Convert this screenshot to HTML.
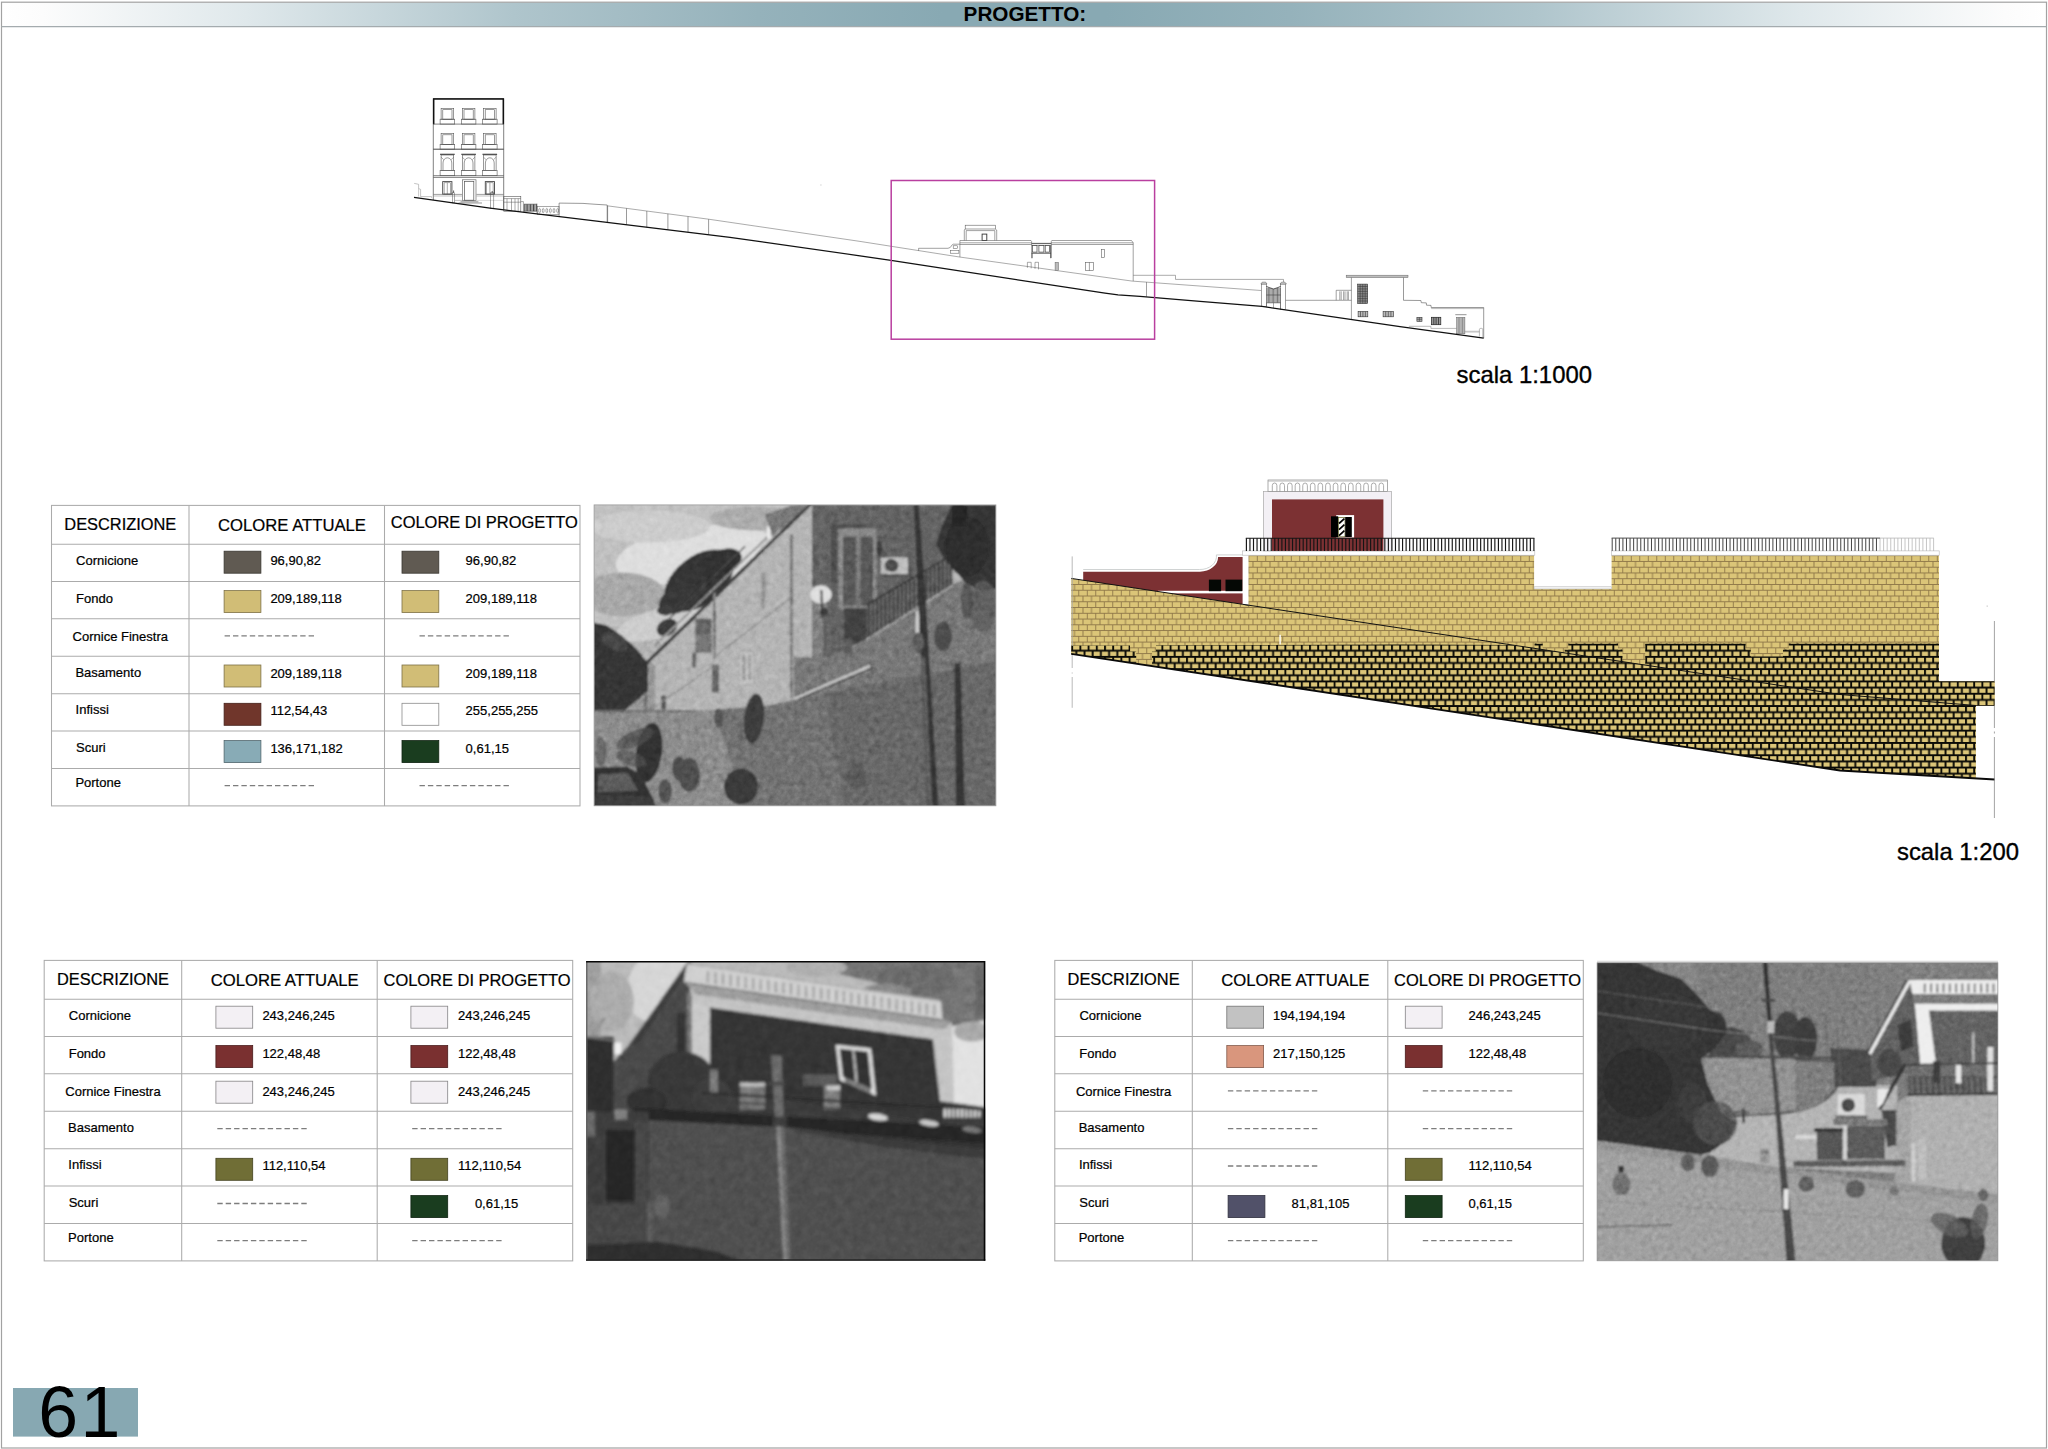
<!DOCTYPE html>
<html lang="it"><head><meta charset="utf-8"><title>PROGETTO: 61</title>
<style>
html,body{margin:0;padding:0;background:#fff;}
body{width:2048px;height:1449px;overflow:hidden;font-family:"Liberation Sans",sans-serif;}
svg{display:block;position:absolute;left:0;top:0;}
text{font-family:"Liberation Sans",sans-serif;fill:#000;}
</style></head><body>
<svg width="2048" height="1449" viewBox="0 0 2048 1449">
<defs>
<linearGradient id="hdr" x1="0" y1="0" x2="1" y2="0">
<stop offset="0" stop-color="#ffffff"/><stop offset="0.02" stop-color="#fcfcfc"/>
<stop offset="0.12" stop-color="#dfe8eb"/><stop offset="0.25" stop-color="#afc5cc"/>
<stop offset="0.37" stop-color="#95b2bb"/><stop offset="0.46" stop-color="#88a9b3"/>
<stop offset="0.54" stop-color="#88a9b3"/><stop offset="0.63" stop-color="#95b2bb"/>
<stop offset="0.75" stop-color="#afc5cc"/><stop offset="0.88" stop-color="#dfe8eb"/>
<stop offset="0.98" stop-color="#fcfcfc"/><stop offset="1" stop-color="#ffffff"/>
</linearGradient>


<pattern id="bl" patternUnits="userSpaceOnUse" x="1248.3" y="555.2" width="8.50" height="11.52">
<rect width="8.50" height="11.52" fill="#dbc578"/>
<path d="M0 0.45 H8.50 M0 6.21 H8.50 M0.45 0 V5.76 M4.70 5.76 V11.52" stroke="#917a4a" stroke-width="0.95" fill="none"/>
</pattern>
<pattern id="bd" patternUnits="userSpaceOnUse" x="1071.2" y="643.6" width="8.20" height="12.30">
<rect width="8.20" height="12.30" fill="#dbc578"/>
<path d="M0 1.0 H8.20 M0 7.15 H8.20 M1.0 0 V6.15 M5.10 6.15 V12.30" stroke="#0a0a06" stroke-width="1.9" fill="none"/>
</pattern>
<clipPath id="p1c"><rect x="0" y="0" width="401.8" height="300.9"/></clipPath>
<filter id="p1b" x="-5%" y="-5%" width="110%" height="110%"><feGaussianBlur stdDeviation="1.1"/></filter>
<filter id="p1n" x="0" y="0" width="100%" height="100%" color-interpolation-filters="sRGB"><feTurbulence type="fractalNoise" baseFrequency="0.16" numOctaves="4" seed="7"/><feColorMatrix type="matrix" values="0.6 0.6 0.6 0 -0.4  0.6 0.6 0.6 0 -0.4  0.6 0.6 0.6 0 -0.4  0 0 0 0 1"/></filter>
<clipPath id="p2c"><rect x="0" y="0" width="399.2" height="299.7"/></clipPath>
<filter id="p2b" x="-5%" y="-5%" width="110%" height="110%"><feGaussianBlur stdDeviation="1.5"/></filter>
<filter id="p2n" x="0" y="0" width="100%" height="100%" color-interpolation-filters="sRGB"><feTurbulence type="fractalNoise" baseFrequency="0.12" numOctaves="3" seed="7"/><feColorMatrix type="matrix" values="0.6 0.6 0.6 0 -0.4  0.6 0.6 0.6 0 -0.4  0.6 0.6 0.6 0 -0.4  0 0 0 0 1"/></filter>
<clipPath id="p3c"><rect x="0" y="0" width="400.8" height="298.0"/></clipPath>
<filter id="p3b" x="-5%" y="-5%" width="110%" height="110%"><feGaussianBlur stdDeviation="1.1"/></filter>
<filter id="p3n" x="0" y="0" width="100%" height="100%" color-interpolation-filters="sRGB"><feTurbulence type="fractalNoise" baseFrequency="0.18" numOctaves="4" seed="7"/><feColorMatrix type="matrix" values="0.6 0.6 0.6 0 -0.4  0.6 0.6 0.6 0 -0.4  0.6 0.6 0.6 0 -0.4  0 0 0 0 1"/></filter>
</defs>
<rect x="0" y="0" width="2048" height="1449" fill="#fff"/>
<rect x="2" y="2.5" width="2044" height="24" fill="url(#hdr)"/>
<rect x="1.5" y="2.2" width="2045" height="1445.8" fill="none" stroke="#a2a2a2" stroke-width="1.2"/>
<line x1="1.5" y1="26.6" x2="2046.5" y2="26.6" stroke="#a4abae" stroke-width="1.3"/>
<text x="963.6" y="21.4" font-size="19.8" font-weight="bold" textLength="122.6" lengthAdjust="spacingAndGlyphs">PROGETTO:</text>
<rect x="13" y="1388" width="125" height="48.6" fill="#87a8b2"/>
<text y="1437.3" font-size="71.6"><tspan x="38.2">6</tspan><tspan x="80.6">1</tspan></text>
<text x="1456.6" y="382.9" font-size="23.2" stroke="#000" stroke-width="0.35" textLength="135.4" lengthAdjust="spacingAndGlyphs">scala 1:1000</text>
<text x="1897" y="859.5" font-size="23.2" stroke="#000" stroke-width="0.35" textLength="122" lengthAdjust="spacingAndGlyphs">scala 1:200</text>

<g stroke="#000" stroke-width="0.22"><g stroke="#ababab" stroke-width="1.05" fill="none">
<rect x="51.5" y="505.4" width="528.5" height="300.5"/>
<line x1="51.5" y1="544.2" x2="580.0" y2="544.2"/>
<line x1="51.5" y1="581.4" x2="580.0" y2="581.4"/>
<line x1="51.5" y1="618.8" x2="580.0" y2="618.8"/>
<line x1="51.5" y1="656.3" x2="580.0" y2="656.3"/>
<line x1="51.5" y1="693.8" x2="580.0" y2="693.8"/>
<line x1="51.5" y1="730.9" x2="580.0" y2="730.9"/>
<line x1="51.5" y1="768.4" x2="580.0" y2="768.4"/>
<line x1="189.0" y1="505.4" x2="189.0" y2="805.9"/>
<line x1="384.5" y1="505.4" x2="384.5" y2="805.9"/>
</g>
<text x="64.3" y="530.4" font-size="15.8" textLength="112" lengthAdjust="spacingAndGlyphs">DESCRIZIONE</text>
<text x="218.0" y="531.3" font-size="16.5" textLength="148" lengthAdjust="spacingAndGlyphs">COLORE ATTUALE</text>
<text x="390.8" y="527.8" font-size="16.5" textLength="187" lengthAdjust="spacingAndGlyphs">COLORE DI PROGETTO</text>
<text x="76.1" y="565.2" font-size="13">Cornicione</text>
<text x="76.0" y="603.0" font-size="13">Fondo</text>
<text x="72.6" y="641.2" font-size="13">Cornice Finestra</text>
<text x="75.4" y="676.8" font-size="13">Basamento</text>
<text x="75.6" y="713.8" font-size="13">Infissi</text>
<text x="76.0" y="752.0" font-size="13">Scuri</text>
<text x="75.4" y="787.0" font-size="13">Portone</text>
<rect x="224.1" y="551.2" width="36.8" height="22" fill="#605a52" stroke="#393631" stroke-width="0.8"/>
<text x="270.4" y="565.4" font-size="13">96,90,82</text>
<rect x="402.0" y="551.2" width="36.8" height="22" fill="#605a52" stroke="#393631" stroke-width="0.8"/>
<text x="465.6" y="565.4" font-size="13">96,90,82</text>
<rect x="224.1" y="590.6" width="36.8" height="22" fill="#d1bd76" stroke="#7d7146" stroke-width="0.8"/>
<text x="270.4" y="603.0" font-size="13">209,189,118</text>
<rect x="402.0" y="590.6" width="36.8" height="22" fill="#d1bd76" stroke="#7d7146" stroke-width="0.8"/>
<text x="465.6" y="603.0" font-size="13">209,189,118</text>
<line x1="224.6" y1="635.9" x2="315.6" y2="635.9" stroke="#7d7d7d" stroke-width="1.3" stroke-dasharray="5.4 3.0"/>
<line x1="419.5" y1="635.9" x2="510.5" y2="635.9" stroke="#7d7d7d" stroke-width="1.3" stroke-dasharray="5.4 3.0"/>
<rect x="224.1" y="665.0" width="36.8" height="22" fill="#d1bd76" stroke="#7d7146" stroke-width="0.8"/>
<text x="270.4" y="677.6" font-size="13">209,189,118</text>
<rect x="402.0" y="665.0" width="36.8" height="22" fill="#d1bd76" stroke="#7d7146" stroke-width="0.8"/>
<text x="465.6" y="677.6" font-size="13">209,189,118</text>
<rect x="224.1" y="703.3" width="36.8" height="22" fill="#70362b" stroke="#432019" stroke-width="0.8"/>
<text x="270.4" y="715.0" font-size="13">112,54,43</text>
<rect x="402.0" y="703.3" width="36.8" height="22" fill="#ffffff" stroke="#8c8c8c" stroke-width="0.8"/>
<text x="465.6" y="715.0" font-size="13">255,255,255</text>
<rect x="224.1" y="740.6" width="36.8" height="22" fill="#88abb6" stroke="#51666d" stroke-width="0.8"/>
<text x="270.4" y="752.9" font-size="13">136,171,182</text>
<rect x="402.0" y="740.6" width="36.8" height="22" fill="#1a3d1f" stroke="#0f2412" stroke-width="0.8"/>
<text x="465.6" y="752.9" font-size="13">0,61,15</text>
<line x1="224.6" y1="785.7" x2="315.6" y2="785.7" stroke="#7d7d7d" stroke-width="1.3" stroke-dasharray="5.4 3.0"/>
<line x1="419.5" y1="785.7" x2="510.5" y2="785.7" stroke="#7d7d7d" stroke-width="1.3" stroke-dasharray="5.4 3.0"/>
<g stroke="#ababab" stroke-width="1.05" fill="none">
<rect x="44.2" y="960.4" width="528.5" height="300.5"/>
<line x1="44.2" y1="999.2" x2="572.7" y2="999.2"/>
<line x1="44.2" y1="1036.4" x2="572.7" y2="1036.4"/>
<line x1="44.2" y1="1073.8" x2="572.7" y2="1073.8"/>
<line x1="44.2" y1="1111.3" x2="572.7" y2="1111.3"/>
<line x1="44.2" y1="1148.8" x2="572.7" y2="1148.8"/>
<line x1="44.2" y1="1185.9" x2="572.7" y2="1185.9"/>
<line x1="44.2" y1="1223.4" x2="572.7" y2="1223.4"/>
<line x1="181.7" y1="960.4" x2="181.7" y2="1260.9"/>
<line x1="377.2" y1="960.4" x2="377.2" y2="1260.9"/>
</g>
<text x="57.0" y="985.4" font-size="15.8" textLength="112" lengthAdjust="spacingAndGlyphs">DESCRIZIONE</text>
<text x="210.7" y="986.3" font-size="16.5" textLength="148" lengthAdjust="spacingAndGlyphs">COLORE ATTUALE</text>
<text x="383.5" y="986.3" font-size="16.5" textLength="187" lengthAdjust="spacingAndGlyphs">COLORE DI PROGETTO</text>
<text x="68.8" y="1020.2" font-size="13">Cornicione</text>
<text x="68.7" y="1058.0" font-size="13">Fondo</text>
<text x="65.3" y="1096.2" font-size="13">Cornice Finestra</text>
<text x="68.1" y="1131.8" font-size="13">Basamento</text>
<text x="68.3" y="1168.8" font-size="13">Infissi</text>
<text x="68.7" y="1207.0" font-size="13">Scuri</text>
<text x="68.1" y="1242.0" font-size="13">Portone</text>
<rect x="215.9" y="1006.2" width="36.8" height="22" fill="#f3f0f4" stroke="#858486" stroke-width="0.8"/>
<text x="262.4" y="1020.4" font-size="13">243,246,245</text>
<rect x="410.9" y="1006.2" width="36.8" height="22" fill="#f3f0f4" stroke="#858486" stroke-width="0.8"/>
<text x="458.0" y="1020.4" font-size="13">243,246,245</text>
<rect x="215.9" y="1045.6" width="36.8" height="22" fill="#7a3030" stroke="#491c1c" stroke-width="0.8"/>
<text x="262.4" y="1058.0" font-size="13">122,48,48</text>
<rect x="410.9" y="1045.6" width="36.8" height="22" fill="#7a3030" stroke="#491c1c" stroke-width="0.8"/>
<text x="458.0" y="1058.0" font-size="13">122,48,48</text>
<rect x="215.9" y="1081.2" width="36.8" height="22" fill="#f3f0f4" stroke="#858486" stroke-width="0.8"/>
<text x="262.4" y="1095.5" font-size="13">243,246,245</text>
<rect x="410.9" y="1081.2" width="36.8" height="22" fill="#f3f0f4" stroke="#858486" stroke-width="0.8"/>
<text x="458.0" y="1095.5" font-size="13">243,246,245</text>
<line x1="217.3" y1="1128.6" x2="308.3" y2="1128.6" stroke="#7d7d7d" stroke-width="1.3" stroke-dasharray="5.4 3.0"/>
<line x1="412.2" y1="1128.6" x2="503.2" y2="1128.6" stroke="#7d7d7d" stroke-width="1.3" stroke-dasharray="5.4 3.0"/>
<rect x="215.9" y="1158.3" width="36.8" height="22" fill="#706e36" stroke="#434220" stroke-width="0.8"/>
<text x="262.4" y="1170.0" font-size="13">112,110,54</text>
<rect x="410.9" y="1158.3" width="36.8" height="22" fill="#706e36" stroke="#434220" stroke-width="0.8"/>
<text x="458.0" y="1170.0" font-size="13">112,110,54</text>
<line x1="217.3" y1="1203.5" x2="308.3" y2="1203.5" stroke="#7d7d7d" stroke-width="1.3" stroke-dasharray="5.4 3.0"/>
<rect x="410.9" y="1195.6" width="36.8" height="22" fill="#1a3d1f" stroke="#0f2412" stroke-width="0.8"/>
<text x="474.9" y="1207.9" font-size="13">0,61,15</text>
<line x1="217.3" y1="1240.7" x2="308.3" y2="1240.7" stroke="#7d7d7d" stroke-width="1.3" stroke-dasharray="5.4 3.0"/>
<line x1="412.2" y1="1240.7" x2="503.2" y2="1240.7" stroke="#7d7d7d" stroke-width="1.3" stroke-dasharray="5.4 3.0"/>
<g stroke="#ababab" stroke-width="1.05" fill="none">
<rect x="1054.8" y="960.4" width="528.5" height="300.5"/>
<line x1="1054.8" y1="999.2" x2="1583.3" y2="999.2"/>
<line x1="1054.8" y1="1036.4" x2="1583.3" y2="1036.4"/>
<line x1="1054.8" y1="1073.8" x2="1583.3" y2="1073.8"/>
<line x1="1054.8" y1="1111.3" x2="1583.3" y2="1111.3"/>
<line x1="1054.8" y1="1148.8" x2="1583.3" y2="1148.8"/>
<line x1="1054.8" y1="1185.9" x2="1583.3" y2="1185.9"/>
<line x1="1054.8" y1="1223.4" x2="1583.3" y2="1223.4"/>
<line x1="1192.3" y1="960.4" x2="1192.3" y2="1260.9"/>
<line x1="1387.8" y1="960.4" x2="1387.8" y2="1260.9"/>
</g>
<text x="1067.6" y="985.4" font-size="15.8" textLength="112" lengthAdjust="spacingAndGlyphs">DESCRIZIONE</text>
<text x="1221.3" y="986.3" font-size="16.5" textLength="148" lengthAdjust="spacingAndGlyphs">COLORE ATTUALE</text>
<text x="1394.1" y="986.3" font-size="16.5" textLength="187" lengthAdjust="spacingAndGlyphs">COLORE DI PROGETTO</text>
<text x="1079.4" y="1020.2" font-size="13">Cornicione</text>
<text x="1079.3" y="1058.0" font-size="13">Fondo</text>
<text x="1075.9" y="1096.2" font-size="13">Cornice Finestra</text>
<text x="1078.7" y="1131.8" font-size="13">Basamento</text>
<text x="1078.9" y="1168.8" font-size="13">Infissi</text>
<text x="1079.3" y="1207.0" font-size="13">Scuri</text>
<text x="1078.7" y="1242.0" font-size="13">Portone</text>
<rect x="1226.8" y="1006.2" width="36.8" height="22" fill="#c2c2c2" stroke="#747474" stroke-width="0.8"/>
<text x="1273.0" y="1020.4" font-size="13">194,194,194</text>
<rect x="1405.3" y="1006.2" width="36.8" height="22" fill="#f3f0f4" stroke="#858486" stroke-width="0.8"/>
<text x="1468.5" y="1020.4" font-size="13">246,243,245</text>
<rect x="1226.8" y="1045.6" width="36.8" height="22" fill="#d9967d" stroke="#825a4b" stroke-width="0.8"/>
<text x="1273.0" y="1058.0" font-size="13">217,150,125</text>
<rect x="1405.3" y="1045.6" width="36.8" height="22" fill="#7a3030" stroke="#491c1c" stroke-width="0.8"/>
<text x="1468.5" y="1058.0" font-size="13">122,48,48</text>
<line x1="1227.9" y1="1090.9" x2="1318.9" y2="1090.9" stroke="#7d7d7d" stroke-width="1.3" stroke-dasharray="5.4 3.0"/>
<line x1="1422.8" y1="1090.9" x2="1513.8" y2="1090.9" stroke="#7d7d7d" stroke-width="1.3" stroke-dasharray="5.4 3.0"/>
<line x1="1227.9" y1="1128.6" x2="1318.9" y2="1128.6" stroke="#7d7d7d" stroke-width="1.3" stroke-dasharray="5.4 3.0"/>
<line x1="1422.8" y1="1128.6" x2="1513.8" y2="1128.6" stroke="#7d7d7d" stroke-width="1.3" stroke-dasharray="5.4 3.0"/>
<line x1="1227.9" y1="1166.0" x2="1318.9" y2="1166.0" stroke="#7d7d7d" stroke-width="1.3" stroke-dasharray="5.4 3.0"/>
<rect x="1405.3" y="1158.3" width="36.8" height="22" fill="#706e36" stroke="#434220" stroke-width="0.8"/>
<text x="1468.5" y="1170.0" font-size="13">112,110,54</text>
<rect x="1228.1" y="1195.6" width="36.8" height="22" fill="#515169" stroke="#30303f" stroke-width="0.8"/>
<text x="1291.6" y="1207.9" font-size="13">81,81,105</text>
<rect x="1405.3" y="1195.6" width="36.8" height="22" fill="#1a3d1f" stroke="#0f2412" stroke-width="0.8"/>
<text x="1468.5" y="1207.9" font-size="13">0,61,15</text>
<line x1="1227.9" y1="1240.7" x2="1318.9" y2="1240.7" stroke="#7d7d7d" stroke-width="1.3" stroke-dasharray="5.4 3.0"/>
<line x1="1422.8" y1="1240.7" x2="1513.8" y2="1240.7" stroke="#7d7d7d" stroke-width="1.3" stroke-dasharray="5.4 3.0"/></g>
<path d="M433.3 200.0 L433.3 98.5 L503.7 98.5 L503.7 209.8" fill="none" stroke="#4a4a4a" stroke-width="0.7"/>
<path d="M433.7 124.3 L433.7 98.9 L503.3 98.9 L503.3 124.3" fill="none" stroke="#111" stroke-width="1.5"/>
<path d="M433.3 124.1 L503.7 124.1" fill="none" stroke="#4a4a4a" stroke-width="0.7"/>
<path d="M433.3 149.2 L503.7 149.2" fill="none" stroke="#333" stroke-width="0.9"/>
<path d="M433.3 175.7 L503.7 175.7" fill="none" stroke="#4a4a4a" stroke-width="0.7"/>
<path d="M433.3 177.4 L503.7 177.4" fill="none" stroke="#4a4a4a" stroke-width="0.7"/>
<path d="M433.3 194.4 L462.0 194.4" fill="none" stroke="#777" stroke-width="0.7"/>
<path d="M476.5 194.4 L503.7 194.4" fill="none" stroke="#777" stroke-width="0.7"/>
<path d="M433.3 196.0 L462.0 196.0" fill="none" stroke="#999" stroke-width="0.6"/>
<path d="M476.5 196.0 L503.7 196.0" fill="none" stroke="#999" stroke-width="0.6"/>
<rect x="441.1" y="108.4" width="12.6" height="10.8" fill="none" stroke="#555" stroke-width="0.6"/>
<rect x="442.8" y="109.7" width="9.2" height="9.5" fill="none" stroke="#555" stroke-width="0.6"/>
<rect x="440.1" y="119.2" width="14.6" height="4.9" fill="none" stroke="#555" stroke-width="0.6"/>
<rect x="441.1" y="133.5" width="12.6" height="10.8" fill="none" stroke="#555" stroke-width="0.6"/>
<rect x="442.8" y="134.8" width="9.2" height="9.5" fill="none" stroke="#555" stroke-width="0.6"/>
<rect x="440.1" y="144.3" width="14.6" height="4.9" fill="none" stroke="#555" stroke-width="0.6"/>
<path d="M440.1 154.3 L454.7 154.3" fill="none" stroke="#333" stroke-width="1.1"/>
<rect x="441.1" y="155.0" width="12.6" height="15.3" fill="none" stroke="#555" stroke-width="0.6"/>
<path d="M443.0 170.3 V163.0 A4.4 5.2 0 0 1 451.8 163.0 V170.3" fill="none" stroke="#555" stroke-width="0.6"/>
<path d="M441.1 157.2 L443.6 159.6" fill="none" stroke="#555" stroke-width="0.5"/>
<path d="M453.7 157.2 L451.2 159.6" fill="none" stroke="#555" stroke-width="0.5"/>
<rect x="440.1" y="170.3" width="14.6" height="5.4" fill="none" stroke="#555" stroke-width="0.6"/>
<rect x="462.3" y="108.4" width="12.6" height="10.8" fill="none" stroke="#555" stroke-width="0.6"/>
<rect x="464.0" y="109.7" width="9.2" height="9.5" fill="none" stroke="#555" stroke-width="0.6"/>
<rect x="461.3" y="119.2" width="14.6" height="4.9" fill="none" stroke="#555" stroke-width="0.6"/>
<rect x="462.3" y="133.5" width="12.6" height="10.8" fill="none" stroke="#555" stroke-width="0.6"/>
<rect x="464.0" y="134.8" width="9.2" height="9.5" fill="none" stroke="#555" stroke-width="0.6"/>
<rect x="461.3" y="144.3" width="14.6" height="4.9" fill="none" stroke="#555" stroke-width="0.6"/>
<path d="M461.3 154.3 L475.9 154.3" fill="none" stroke="#333" stroke-width="1.1"/>
<rect x="462.3" y="155.0" width="12.6" height="15.3" fill="none" stroke="#555" stroke-width="0.6"/>
<path d="M464.2 170.3 V163.0 A4.4 5.2 0 0 1 473.0 163.0 V170.3" fill="none" stroke="#555" stroke-width="0.6"/>
<path d="M462.3 157.2 L464.8 159.6" fill="none" stroke="#555" stroke-width="0.5"/>
<path d="M474.9 157.2 L472.4 159.6" fill="none" stroke="#555" stroke-width="0.5"/>
<rect x="461.3" y="170.3" width="14.6" height="5.4" fill="none" stroke="#555" stroke-width="0.6"/>
<rect x="483.5" y="108.4" width="12.6" height="10.8" fill="none" stroke="#555" stroke-width="0.6"/>
<rect x="485.2" y="109.7" width="9.2" height="9.5" fill="none" stroke="#555" stroke-width="0.6"/>
<rect x="482.5" y="119.2" width="14.6" height="4.9" fill="none" stroke="#555" stroke-width="0.6"/>
<rect x="483.5" y="133.5" width="12.6" height="10.8" fill="none" stroke="#555" stroke-width="0.6"/>
<rect x="485.2" y="134.8" width="9.2" height="9.5" fill="none" stroke="#555" stroke-width="0.6"/>
<rect x="482.5" y="144.3" width="14.6" height="4.9" fill="none" stroke="#555" stroke-width="0.6"/>
<path d="M482.5 154.3 L497.1 154.3" fill="none" stroke="#333" stroke-width="1.1"/>
<rect x="483.5" y="155.0" width="12.6" height="15.3" fill="none" stroke="#555" stroke-width="0.6"/>
<path d="M485.4 170.3 V163.0 A4.4 5.2 0 0 1 494.2 163.0 V170.3" fill="none" stroke="#555" stroke-width="0.6"/>
<path d="M483.5 157.2 L486.0 159.6" fill="none" stroke="#555" stroke-width="0.5"/>
<path d="M496.1 157.2 L493.6 159.6" fill="none" stroke="#555" stroke-width="0.5"/>
<rect x="482.5" y="170.3" width="14.6" height="5.4" fill="none" stroke="#555" stroke-width="0.6"/>
<rect x="442.7" y="181.6" width="9.2" height="12.5" fill="none" stroke="#444" stroke-width="0.9"/>
<rect x="444.1" y="182.8" width="6.4" height="11.3" fill="none" stroke="#555" stroke-width="0.5"/>
<path d="M447.3 182.8 L447.3 194.1" fill="none" stroke="#555" stroke-width="0.5"/>
<rect x="485.3" y="181.6" width="9.2" height="12.5" fill="none" stroke="#444" stroke-width="0.9"/>
<rect x="486.7" y="182.8" width="6.4" height="11.3" fill="none" stroke="#555" stroke-width="0.5"/>
<path d="M489.9 182.8 L489.9 194.1" fill="none" stroke="#555" stroke-width="0.5"/>
<rect x="462.4" y="179.8" width="13.6" height="20.8" fill="none" stroke="#555" stroke-width="0.6"/>
<rect x="464.6" y="181.6" width="9.2" height="18.6" fill="none" stroke="#555" stroke-width="0.7"/>
<path d="M460.5 201.8 L478.4 201.8" fill="none" stroke="#555" stroke-width="0.6"/>
<path d="M458.5 203.0 L482.0 203.0" fill="none" stroke="#555" stroke-width="0.6"/>
<path d="M455.0 200.4 L462.4 200.4" fill="none" stroke="#888" stroke-width="0.5"/>
<path d="M476.0 200.4 L503.7 200.4" fill="none" stroke="#bbb" stroke-width="0.5"/>
<rect x="452.6" y="192.8" width="2.0" height="10.1" fill="none" stroke="#555" stroke-width="0.5"/>
<rect x="490.6" y="192.8" width="3.2" height="15.5" fill="none" stroke="#555" stroke-width="0.5"/>
<path d="M453.6 190.5 L453.6 192.8" fill="none" stroke="#333" stroke-width="0.8"/>
<path d="M492.2 191.0 L492.2 192.8" fill="none" stroke="#333" stroke-width="0.8"/>
<path d="M414.2 183.4 L418.6 184.3 L418.6 188.6 L420.6 189.4 L420.6 196.6 L431.5 196.6 L431.5 197.8" fill="none" stroke="#888" stroke-width="0.5"/>
<path d="M418.6 188.6 L418.6 196.5" fill="none" stroke="#999" stroke-width="0.5"/>
<rect x="503.8" y="196.3" width="17.0" height="14.9" fill="none" stroke="#555" stroke-width="0.6"/>
<path d="M507.0 198.6 L507.0 210.2" fill="none" stroke="#555" stroke-width="0.5"/>
<path d="M511.5 198.6 L511.5 210.7" fill="none" stroke="#555" stroke-width="0.5"/>
<path d="M515.0 198.6 L515.0 211.2" fill="none" stroke="#555" stroke-width="0.5"/>
<path d="M518.2 198.6 L518.2 211.5" fill="none" stroke="#555" stroke-width="0.5"/>
<path d="M503.8 198.6 L520.8 198.6" fill="none" stroke="#555" stroke-width="0.5"/>
<path d="M503.8 202.2 L520.8 202.2" fill="none" stroke="#555" stroke-width="0.5"/>
<path d="M520.8 201.6 L523.4 201.6 L523.4 212.2" fill="none" stroke="#555" stroke-width="0.5"/>
<path d="M524.8 204.2 L524.8 211.2" fill="none" stroke="#333" stroke-width="0.9"/>
<path d="M526.2 204.2 L526.2 211.2" fill="none" stroke="#333" stroke-width="0.9"/>
<path d="M527.7 204.2 L527.7 211.2" fill="none" stroke="#333" stroke-width="0.9"/>
<path d="M529.1 204.2 L529.1 211.2" fill="none" stroke="#333" stroke-width="0.9"/>
<path d="M530.6 204.2 L530.6 211.2" fill="none" stroke="#333" stroke-width="0.9"/>
<path d="M532.0 204.2 L532.0 211.2" fill="none" stroke="#333" stroke-width="0.9"/>
<path d="M533.5 204.2 L533.5 211.2" fill="none" stroke="#333" stroke-width="0.9"/>
<path d="M534.9 204.2 L534.9 211.2" fill="none" stroke="#333" stroke-width="0.9"/>
<path d="M536.4 204.2 L536.4 211.2" fill="none" stroke="#333" stroke-width="0.9"/>
<path d="M524.0 204.2 L537.0 204.2" fill="none" stroke="#444" stroke-width="0.6"/>
<path d="M524.0 211.2 L537.0 211.2" fill="none" stroke="#444" stroke-width="0.6"/>
<path d="M524.0 204.2 L524.0 212.3" fill="none" stroke="#555" stroke-width="0.5"/>
<path d="M537.0 203.6 L537.0 213.8" fill="none" stroke="#555" stroke-width="0.5"/>
<rect x="537.2" y="206.5" width="21.8" height="8.1" fill="none" stroke="#555" stroke-width="0.5"/>
<ellipse cx="539.6" cy="210.6" rx="0.9" ry="2.3" fill="none" stroke="#555" stroke-width="0.5"/>
<ellipse cx="543.2" cy="210.6" rx="0.9" ry="2.3" fill="none" stroke="#555" stroke-width="0.5"/>
<ellipse cx="546.8" cy="210.6" rx="0.9" ry="2.3" fill="none" stroke="#555" stroke-width="0.5"/>
<ellipse cx="550.4" cy="210.6" rx="0.9" ry="2.3" fill="none" stroke="#555" stroke-width="0.5"/>
<ellipse cx="554.0" cy="210.6" rx="0.9" ry="2.3" fill="none" stroke="#555" stroke-width="0.5"/>
<ellipse cx="557.6" cy="210.6" rx="0.9" ry="2.3" fill="none" stroke="#555" stroke-width="0.5"/>
<path d="M559.1 216.5 L559.1 203.1 L583.0 203.4 L594.0 204.2 L607.2 205.0 L607.2 222.4" fill="none" stroke="#555" stroke-width="0.6"/>
<path d="M607.2 205.8 L708.6 219.2 L860.0 241.4 L959.5 257.0 L1132.2 281.1" fill="none" stroke="#666" stroke-width="0.55"/>
<path d="M607.6 205.9 L607.6 222.5" fill="none" stroke="#555" stroke-width="0.6"/>
<path d="M626.5 208.3 L626.5 224.8" fill="none" stroke="#555" stroke-width="0.6"/>
<path d="M646.8 211.0 L646.8 227.3" fill="none" stroke="#555" stroke-width="0.6"/>
<path d="M667.9 213.8 L667.9 229.8" fill="none" stroke="#555" stroke-width="0.6"/>
<path d="M688.0 216.5 L688.0 232.3" fill="none" stroke="#555" stroke-width="0.6"/>
<path d="M708.6 219.2 L708.6 234.8" fill="none" stroke="#555" stroke-width="0.6"/>
<rect x="965.2" y="225.2" width="30.1" height="3.8" fill="none" stroke="#555" stroke-width="0.55"/>
<path d="M964.3 240.5 L964.3 230.0 L965.2 229.0" fill="none" stroke="#555" stroke-width="0.55"/>
<path d="M996.7 240.5 L996.7 230.0 L995.3 229.0" fill="none" stroke="#555" stroke-width="0.55"/>
<path d="M966.2 240.5 L966.2 230.6 L994.8 230.6 L994.8 240.5" fill="none" stroke="#555" stroke-width="0.55"/>
<rect x="982.1" y="234.1" width="4.7" height="6.4" fill="none" stroke="#333" stroke-width="0.9"/>
<path d="M959.9 257.1 L959.9 240.5 L1031.0 240.5 L1031.6 241.4 L1031.6 258.2" fill="none" stroke="#555" stroke-width="0.55"/>
<path d="M959.9 242.8 L1031.6 242.8" fill="none" stroke="#555" stroke-width="0.55"/>
<path d="M959.9 244.5 L1031.6 244.5" fill="none" stroke="#555" stroke-width="0.55"/>
<path d="M918.6 250.9 L918.6 248.3 L948.0 248.3 L950.3 247.4 L952.2 244.8 L953.4 244.2 L959.9 244.2" fill="none" stroke="#555" stroke-width="0.55"/>
<rect x="953.2" y="245.8" width="4.4" height="2.9" fill="none" stroke="#555" stroke-width="0.5"/>
<rect x="950.4" y="250.6" width="8.5" height="2.6" fill="none" stroke="#555" stroke-width="0.5"/>
<path d="M1031.6 243.4 L1051.3 243.4" fill="none" stroke="#444" stroke-width="0.9"/>
<path d="M1031.6 245.3 L1051.3 245.3" fill="none" stroke="#555" stroke-width="0.55"/>
<rect x="1032.5" y="245.6" width="4.5" height="6.5" fill="none" stroke="#444" stroke-width="0.7"/>
<rect x="1038.9" y="245.6" width="5.0" height="6.5" fill="none" stroke="#444" stroke-width="0.7"/>
<rect x="1045.2" y="245.6" width="4.4" height="6.5" fill="none" stroke="#444" stroke-width="0.7"/>
<path d="M1031.6 253.2 L1051.0 253.2" fill="none" stroke="#444" stroke-width="0.9"/>
<path d="M1050.7 245.3 L1050.7 258.2" fill="none" stroke="#444" stroke-width="0.9"/>
<path d="M1032.2 253.2 L1032.2 258.2" fill="none" stroke="#444" stroke-width="0.7"/>
<path d="M1051.3 258.0 L1051.3 241.4 L1051.8 240.5 L1131.5 240.5 L1133.2 242.8 L1133.2 281.1" fill="none" stroke="#555" stroke-width="0.55"/>
<path d="M1051.3 242.8 L1133.2 242.8" fill="none" stroke="#555" stroke-width="0.55"/>
<path d="M1051.3 244.5 L1133.2 244.5" fill="none" stroke="#555" stroke-width="0.55"/>
<rect x="1101.4" y="249.4" width="3.1" height="8.2" fill="none" stroke="#555" stroke-width="0.55"/>
<rect x="1085.4" y="262.3" width="8.0" height="8.4" fill="none" stroke="#555" stroke-width="0.55"/>
<path d="M1089.4 262.3 L1089.4 270.7" fill="none" stroke="#555" stroke-width="0.55"/>
<rect x="1055.1" y="262.3" width="3.4" height="8.4" fill="#bbb" stroke="#666" stroke-width="0.5"/>
<path d="M1027.4 267.8 L1027.4 262.3 L1031.2 262.3 L1031.2 268.3" fill="none" stroke="#555" stroke-width="0.5"/>
<path d="M1035.0 268.9 L1035.0 262.3 L1038.5 262.3 L1038.5 269.4" fill="none" stroke="#555" stroke-width="0.5"/>
<path d="M1133.2 275.3 L1175.5 275.3 L1175.5 279.4 L1283.5 279.4 L1283.5 282.0" fill="none" stroke="#666" stroke-width="0.55"/>
<path d="M1132.2 281.1 L1261.2 290.5" fill="none" stroke="#666" stroke-width="0.55"/>
<path d="M1146.5 282.1 L1146.5 296.6" fill="none" stroke="#555" stroke-width="0.55"/>
<rect x="1261.6" y="284.0" width="4.7" height="22.7" fill="none" stroke="#555" stroke-width="0.55"/>
<rect x="1280.7" y="284.0" width="5.0" height="25.5" fill="none" stroke="#555" stroke-width="0.55"/>
<path d="M1260.9 284.0 L1262.2 282.2 L1265.7 282.2 L1267.0 284.0 Z" fill="#ddd" stroke="#555" stroke-width="0.55"/>
<path d="M1280.0 284.0 L1281.5 282.2 L1284.9 282.2 L1286.4 284.0 Z" fill="#ddd" stroke="#555" stroke-width="0.55"/>
<path d="M1266.3 286.4 L1270.0 287.9 L1273.5 289.0 L1277.0 287.9 L1280.7 286.4" fill="none" stroke="#333" stroke-width="0.8"/>
<path d="M1267.1 287.9 L1267.1 302.8" fill="none" stroke="#444" stroke-width="0.7"/>
<path d="M1268.4 287.9 L1268.4 302.8" fill="none" stroke="#444" stroke-width="0.7"/>
<path d="M1269.7 287.9 L1269.7 302.8" fill="none" stroke="#444" stroke-width="0.7"/>
<path d="M1271.0 287.9 L1271.0 302.8" fill="none" stroke="#444" stroke-width="0.7"/>
<path d="M1272.3 288.8 L1272.3 302.8" fill="none" stroke="#444" stroke-width="0.7"/>
<path d="M1273.6 288.8 L1273.6 302.8" fill="none" stroke="#444" stroke-width="0.7"/>
<path d="M1274.9 288.8 L1274.9 302.8" fill="none" stroke="#444" stroke-width="0.7"/>
<path d="M1276.2 287.9 L1276.2 302.8" fill="none" stroke="#444" stroke-width="0.7"/>
<path d="M1277.5 287.9 L1277.5 302.8" fill="none" stroke="#444" stroke-width="0.7"/>
<path d="M1278.8 287.9 L1278.8 302.8" fill="none" stroke="#444" stroke-width="0.7"/>
<path d="M1280.1 287.9 L1280.1 302.8" fill="none" stroke="#444" stroke-width="0.7"/>
<path d="M1266.3 295.0 L1280.7 295.0" fill="none" stroke="#444" stroke-width="0.6"/>
<path d="M1266.3 302.8 L1280.7 302.8" fill="none" stroke="#444" stroke-width="0.6"/>
<path d="M1266.5 302.8 L1266.5 307.1" fill="none" stroke="#555" stroke-width="0.5"/>
<path d="M1273.5 302.8 L1273.5 308.1" fill="none" stroke="#555" stroke-width="0.5"/>
<path d="M1280.5 302.8 L1280.5 309.1" fill="none" stroke="#555" stroke-width="0.5"/>
<path d="M1285.7 300.3 L1351.4 300.3" fill="none" stroke="#555" stroke-width="0.55"/>
<path d="M1336.2 300.3 L1336.2 290.3 L1351.4 290.3" fill="none" stroke="#555" stroke-width="0.55"/>
<path d="M1339.8 291.3 L1339.8 300.0" fill="none" stroke="#666" stroke-width="0.6"/>
<path d="M1341.2 291.3 L1341.2 300.0" fill="none" stroke="#666" stroke-width="0.6"/>
<path d="M1343.6 291.3 L1343.6 300.0" fill="none" stroke="#666" stroke-width="0.6"/>
<path d="M1345.0 291.3 L1345.0 300.0" fill="none" stroke="#666" stroke-width="0.6"/>
<path d="M1347.2 291.3 L1347.2 300.0" fill="none" stroke="#666" stroke-width="0.6"/>
<path d="M1348.4 291.3 L1348.4 300.0" fill="none" stroke="#666" stroke-width="0.6"/>
<rect x="1346.2" y="275.2" width="61.8" height="2.4" fill="#bdbdbd" stroke="#666" stroke-width="0.5"/>
<path d="M1351.4 319.6 L1351.4 277.6" fill="none" stroke="#555" stroke-width="0.55"/>
<path d="M1403.5 277.6 L1403.5 300.3 L1420.9 300.5 L1421.3 302.7 L1426.3 302.9 L1426.5 305.2 L1431.0 305.4 L1431.2 307.5 L1483.7 307.5 L1483.7 338.2" fill="none" stroke="#555" stroke-width="0.6"/>
<path d="M1431.2 308.6 L1483.7 308.6" fill="none" stroke="#777" stroke-width="0.5"/>
<rect x="1357.7" y="284.1" width="10.0" height="19.4" fill="#8a8a8a" stroke="#333" stroke-width="0.6"/>
<path d="M1357.7 286.5 L1367.7 286.5" fill="none" stroke="#333" stroke-width="0.5"/>
<path d="M1357.7 288.9 L1367.7 288.9" fill="none" stroke="#333" stroke-width="0.5"/>
<path d="M1357.7 291.4 L1367.7 291.4" fill="none" stroke="#333" stroke-width="0.5"/>
<path d="M1357.7 293.8 L1367.7 293.8" fill="none" stroke="#333" stroke-width="0.5"/>
<path d="M1357.7 296.2 L1367.7 296.2" fill="none" stroke="#333" stroke-width="0.5"/>
<path d="M1357.7 298.6 L1367.7 298.6" fill="none" stroke="#333" stroke-width="0.5"/>
<path d="M1357.7 301.0 L1367.7 301.0" fill="none" stroke="#333" stroke-width="0.5"/>
<path d="M1360.2 284.1 L1360.2 303.5" fill="none" stroke="#333" stroke-width="0.5"/>
<path d="M1362.7 284.1 L1362.7 303.5" fill="none" stroke="#333" stroke-width="0.5"/>
<path d="M1365.2 284.1 L1365.2 303.5" fill="none" stroke="#333" stroke-width="0.5"/>
<rect x="1358.1" y="311.5" width="9.7" height="5.3" fill="#bbb" stroke="#333" stroke-width="0.6"/>
<path d="M1360.5 311.5 L1360.5 316.8" fill="none" stroke="#333" stroke-width="0.6"/>
<path d="M1362.9 311.5 L1362.9 316.8" fill="none" stroke="#333" stroke-width="0.6"/>
<path d="M1365.4 311.5 L1365.4 316.8" fill="none" stroke="#333" stroke-width="0.6"/>
<rect x="1383.1" y="311.5" width="10.4" height="5.3" fill="#bbb" stroke="#333" stroke-width="0.6"/>
<path d="M1385.7 311.5 L1385.7 316.8" fill="none" stroke="#333" stroke-width="0.6"/>
<path d="M1388.3 311.5 L1388.3 316.8" fill="none" stroke="#333" stroke-width="0.6"/>
<path d="M1390.9 311.5 L1390.9 316.8" fill="none" stroke="#333" stroke-width="0.6"/>
<rect x="1416.9" y="317.4" width="5.1" height="3.9" fill="#aaa" stroke="#333" stroke-width="0.6"/>
<path d="M1419.4 317.4 L1419.4 321.3" fill="none" stroke="#333" stroke-width="0.5"/>
<path d="M1416.9 319.3 L1422.0 319.3" fill="none" stroke="#333" stroke-width="0.5"/>
<rect x="1431.4" y="317.3" width="9.4" height="7.4" fill="#999" stroke="#222" stroke-width="0.7"/>
<path d="M1433.8 317.3 L1433.8 324.7" fill="none" stroke="#222" stroke-width="0.7"/>
<path d="M1436.1 317.3 L1436.1 324.7" fill="none" stroke="#222" stroke-width="0.7"/>
<path d="M1438.5 317.3 L1438.5 324.7" fill="none" stroke="#222" stroke-width="0.7"/>
<rect x="1456.6" y="317.3" width="8.3" height="16.5" fill="#b4b4b4" stroke="#666" stroke-width="0.5"/>
<path d="M1459.0 317.3 L1459.0 333.6" fill="none" stroke="#888" stroke-width="0.9"/>
<path d="M1462.4 317.3 L1462.4 333.6" fill="none" stroke="#888" stroke-width="0.9"/>
<path d="M1455.3 314.7 L1466.5 314.7" fill="none" stroke="#777" stroke-width="0.8"/>
<path d="M1408.9 326.3 L1430.9 326.3 L1430.9 328.4 L1456.6 328.4" fill="none" stroke="#777" stroke-width="0.5"/>
<path d="M1464.9 331.3 L1479.4 331.3" fill="none" stroke="#777" stroke-width="0.5"/>
<path d="M1464.9 332.4 L1479.4 332.4" fill="none" stroke="#aaa" stroke-width="0.4"/>
<path d="M1479.4 336.6 V329.6 Q1479.4 328.4 1480.6 328.4 H1481.6 Q1482.8 328.4 1482.8 329.6 V337.2" fill="none" stroke="#777" stroke-width="0.5"/>
<path d="M414.0 197.3 L490.0 208.1 L607.0 222.4 L730.0 237.4 L860.0 255.8 L891.0 260.4 L1105.0 293.2 L1118.0 294.9 L1140.0 296.3 L1200.0 301.3 L1262.0 306.4 L1400.0 326.7 L1483.7 338.2" fill="none" stroke="#111" stroke-width="1.25"/>
<rect x="891.2" y="180.5" width="263.4" height="158.7" fill="none" stroke="#b93f9f" stroke-width="1.5"/>
<rect x="820.3" y="184.6" width="1.2" height="0.8" fill="#bbb"/>
<path d="M1083.2 582 V571.7 H1200 A18.1 14.9 0 0 0 1218.1 556.9 H1243 V606 Z" fill="#7c3133"/>
<path d="M1083.2 569.5 H1199.4 A16.4 13.2 0 0 0 1216.4 554.9 H1243" fill="none" stroke="#c4c8c8" stroke-width="0.8"/>
<rect x="1158" y="590.8" width="85" height="2.6" fill="#fff"/>
<rect x="1208.9" y="579.6" width="12.2" height="11.6" fill="#050805"/>
<rect x="1225.5" y="579.6" width="17" height="11.6" fill="#050805"/>
<path d="M1071.2 578.4 L1248.3 605.1 L1248.3 555.2 L1534.1 555.2 L1534.1 588.8 L1611.6 588.8 L1611.6 555.2 L1939.0 555.2 L1939.0 681.2 L1994.6 681.2 L1994.6 705.7 L1975.8 705.7 L1975.8 778.4 L1840.0 770.5 L1071.2 653.8 Z" fill="url(#bl)"/>
<path d="M1071.2 645.5 L1130.0 645.5 L1130.0 651.6 L1136.2 651.6 L1136.2 663.7 L1152.0 666.1 L1152.0 651.6 L1156.0 651.6 L1156.0 645.2 L1400.0 644.6 L1511.0 645.0 L1534.6 648.4 L1534.6 643.5 L1542.7 643.5 L1542.7 649.6 L1564.7 652.9 L1564.7 649.6 L1568.3 649.6 L1568.3 643.5 L1618.0 643.5 L1618.0 649.6 L1622.5 649.6 L1622.5 661.6 L1645.2 665.1 L1645.2 643.5 L1745.6 643.5 L1745.6 649.6 L1750.7 649.6 L1750.7 656.6 L1783.0 656.6 L1783.0 649.6 L1788.8 649.6 L1788.8 643.5 L1939.0 643.5 L1939.0 681.2 L1994.6 681.2 L1994.6 705.7 L1975.8 705.7 L1975.8 778.4 L1840.0 770.5 L1071.2 653.8 Z" fill="url(#bd)"/>
<path d="M1071.2 578.4 L1840 694.5 L1976 705.5" fill="none" stroke="#111" stroke-width="1.0"/>
<path d="M1071.2 653.8 L1840 770.5 L1994.8 779.5" fill="none" stroke="#0a0a0a" stroke-width="1.8"/>
<rect x="1279.4" y="634.8" width="1.4" height="9.6" fill="#fff"/>
<rect x="1242.6" y="551" width="5.7" height="53.6" fill="#fff"/>
<path d="M1248.3 605.1 L1242.6 604.3" stroke="#111" stroke-width="1"/>
<rect x="1242.6" y="550.9" width="292.2" height="4.3" fill="#fff" stroke="#b8b8b8" stroke-width="0.6"/>
<rect x="1611.4" y="550.9" width="327.8" height="4.3" fill="#fff" stroke="#b8b8b8" stroke-width="0.6"/>
<rect x="1534.1" y="586.8" width="77.5" height="2.2" fill="#f4f4f4" stroke="#b0b0b0" stroke-width="0.5"/>
<rect x="1263.6" y="491.6" width="127.9" height="59.3" fill="#f3f0f5" stroke="#a8a8a8" stroke-width="0.7"/>
<rect x="1272.0" y="499.4" width="111.4" height="51.5" fill="#7c3133"/>
<rect x="1268.0" y="480.0" width="119.6" height="11.6" fill="#fff" stroke="#888" stroke-width="0.7"/>
<line x1="1268" y1="481.2" x2="1387.6" y2="481.2" stroke="#aaa" stroke-width="0.6"/>
<path d="M1272.30 491.4 V485.60 A2.3 2.6 0 0 1 1276.90 485.60 V491.4" fill="none" stroke="#8a8a8a" stroke-width="0.7"/>
<path d="M1279.92 491.4 V485.60 A2.3 2.6 0 0 1 1284.52 485.60 V491.4" fill="none" stroke="#8a8a8a" stroke-width="0.7"/>
<path d="M1287.54 491.4 V485.60 A2.3 2.6 0 0 1 1292.14 485.60 V491.4" fill="none" stroke="#8a8a8a" stroke-width="0.7"/>
<path d="M1295.16 491.4 V485.60 A2.3 2.6 0 0 1 1299.76 485.60 V491.4" fill="none" stroke="#8a8a8a" stroke-width="0.7"/>
<path d="M1302.78 491.4 V485.60 A2.3 2.6 0 0 1 1307.38 485.60 V491.4" fill="none" stroke="#8a8a8a" stroke-width="0.7"/>
<path d="M1310.40 491.4 V485.60 A2.3 2.6 0 0 1 1315.00 485.60 V491.4" fill="none" stroke="#8a8a8a" stroke-width="0.7"/>
<path d="M1318.02 491.4 V485.60 A2.3 2.6 0 0 1 1322.62 485.60 V491.4" fill="none" stroke="#8a8a8a" stroke-width="0.7"/>
<path d="M1325.64 491.4 V485.60 A2.3 2.6 0 0 1 1330.24 485.60 V491.4" fill="none" stroke="#8a8a8a" stroke-width="0.7"/>
<path d="M1333.26 491.4 V485.60 A2.3 2.6 0 0 1 1337.86 485.60 V491.4" fill="none" stroke="#8a8a8a" stroke-width="0.7"/>
<path d="M1340.88 491.4 V485.60 A2.3 2.6 0 0 1 1345.48 485.60 V491.4" fill="none" stroke="#8a8a8a" stroke-width="0.7"/>
<path d="M1348.50 491.4 V485.60 A2.3 2.6 0 0 1 1353.10 485.60 V491.4" fill="none" stroke="#8a8a8a" stroke-width="0.7"/>
<path d="M1356.12 491.4 V485.60 A2.3 2.6 0 0 1 1360.72 485.60 V491.4" fill="none" stroke="#8a8a8a" stroke-width="0.7"/>
<path d="M1363.74 491.4 V485.60 A2.3 2.6 0 0 1 1368.34 485.60 V491.4" fill="none" stroke="#8a8a8a" stroke-width="0.7"/>
<path d="M1371.36 491.4 V485.60 A2.3 2.6 0 0 1 1375.96 485.60 V491.4" fill="none" stroke="#8a8a8a" stroke-width="0.7"/>
<path d="M1378.98 491.4 V485.60 A2.3 2.6 0 0 1 1383.58 485.60 V491.4" fill="none" stroke="#8a8a8a" stroke-width="0.7"/>
<rect x="1336.2" y="515.1" width="17.9" height="22.5" fill="#fff"/>
<rect x="1331.0" y="516.3" width="7.2" height="21.0" fill="#000"/>
<rect x="1338.4" y="517.4" width="6.6" height="19.4" fill="#fff" stroke="#5b5f1f" stroke-width="0.7"/>
<path d="M1339 523.5 L1344.4 518.6 M1339 529.6 L1344.4 524.6 M1339 535.6 L1344.4 530.6" stroke="#000" stroke-width="1.7"/>
<rect x="1345.2" y="517.0" width="6.6" height="20.0" fill="#000"/>
<path d="M1246.40 538.2 V550.9 M1249.95 538.2 V550.9 M1253.50 538.2 V550.9 M1257.05 538.2 V550.9 M1260.60 538.2 V550.9 M1264.15 538.2 V550.9 M1267.70 538.2 V550.9 M1271.25 538.2 V550.9 M1274.80 538.2 V550.9 M1278.34 538.2 V550.9 M1281.89 538.2 V550.9 M1285.44 538.2 V550.9 M1288.99 538.2 V550.9 M1292.54 538.2 V550.9 M1296.09 538.2 V550.9 M1299.64 538.2 V550.9 M1303.19 538.2 V550.9 M1306.74 538.2 V550.9 M1310.29 538.2 V550.9 M1313.84 538.2 V550.9 M1317.39 538.2 V550.9 M1320.94 538.2 V550.9 M1324.49 538.2 V550.9 M1328.04 538.2 V550.9 M1331.59 538.2 V550.9 M1335.13 538.2 V550.9 M1338.68 538.2 V550.9 M1342.23 538.2 V550.9 M1345.78 538.2 V550.9 M1349.33 538.2 V550.9 M1352.88 538.2 V550.9 M1356.43 538.2 V550.9 M1359.98 538.2 V550.9 M1363.53 538.2 V550.9 M1367.08 538.2 V550.9 M1370.63 538.2 V550.9 M1374.18 538.2 V550.9 M1377.73 538.2 V550.9 M1381.28 538.2 V550.9 M1384.83 538.2 V550.9 M1388.38 538.2 V550.9 M1391.92 538.2 V550.9 M1395.47 538.2 V550.9 M1399.02 538.2 V550.9 M1402.57 538.2 V550.9 M1406.12 538.2 V550.9 M1409.67 538.2 V550.9 M1413.22 538.2 V550.9 M1416.77 538.2 V550.9 M1420.32 538.2 V550.9 M1423.87 538.2 V550.9 M1427.42 538.2 V550.9 M1430.97 538.2 V550.9 M1434.52 538.2 V550.9 M1438.07 538.2 V550.9 M1441.62 538.2 V550.9 M1445.17 538.2 V550.9 M1448.71 538.2 V550.9 M1452.26 538.2 V550.9 M1455.81 538.2 V550.9 M1459.36 538.2 V550.9 M1462.91 538.2 V550.9 M1466.46 538.2 V550.9 M1470.01 538.2 V550.9 M1473.56 538.2 V550.9 M1477.11 538.2 V550.9 M1480.66 538.2 V550.9 M1484.21 538.2 V550.9 M1487.76 538.2 V550.9 M1491.31 538.2 V550.9 M1494.86 538.2 V550.9 M1498.41 538.2 V550.9 M1501.96 538.2 V550.9 M1505.50 538.2 V550.9 M1509.05 538.2 V550.9 M1512.60 538.2 V550.9 M1516.15 538.2 V550.9 M1519.70 538.2 V550.9 M1523.25 538.2 V550.9 M1526.80 538.2 V550.9 M1530.35 538.2 V550.9 M1533.90 538.2 V550.9" stroke="#151515" stroke-width="1.15" fill="none"/>
<path d="M1245.8 538.2 H1534.4" stroke="#151515" stroke-width="1.1"/>
<path d="M1612.20 538.2 V550.9 M1615.77 538.2 V550.9 M1619.34 538.2 V550.9 M1622.91 538.2 V550.9 M1626.48 538.2 V550.9 M1630.06 538.2 V550.9 M1633.63 538.2 V550.9 M1637.20 538.2 V550.9 M1640.77 538.2 V550.9 M1644.34 538.2 V550.9 M1647.91 538.2 V550.9 M1651.48 538.2 V550.9 M1655.05 538.2 V550.9 M1658.62 538.2 V550.9 M1662.20 538.2 V550.9 M1665.77 538.2 V550.9 M1669.34 538.2 V550.9 M1672.91 538.2 V550.9 M1676.48 538.2 V550.9 M1680.05 538.2 V550.9 M1683.62 538.2 V550.9 M1687.19 538.2 V550.9 M1690.76 538.2 V550.9 M1694.34 538.2 V550.9 M1697.91 538.2 V550.9 M1701.48 538.2 V550.9 M1705.05 538.2 V550.9 M1708.62 538.2 V550.9 M1712.19 538.2 V550.9 M1715.76 538.2 V550.9 M1719.33 538.2 V550.9 M1722.90 538.2 V550.9 M1726.48 538.2 V550.9 M1730.05 538.2 V550.9 M1733.62 538.2 V550.9 M1737.19 538.2 V550.9 M1740.76 538.2 V550.9 M1744.33 538.2 V550.9 M1747.90 538.2 V550.9 M1751.47 538.2 V550.9 M1755.04 538.2 V550.9 M1758.62 538.2 V550.9 M1762.19 538.2 V550.9 M1765.76 538.2 V550.9 M1769.33 538.2 V550.9 M1772.90 538.2 V550.9 M1776.47 538.2 V550.9 M1780.04 538.2 V550.9 M1783.61 538.2 V550.9 M1787.18 538.2 V550.9 M1790.76 538.2 V550.9 M1794.33 538.2 V550.9 M1797.90 538.2 V550.9 M1801.47 538.2 V550.9 M1805.04 538.2 V550.9 M1808.61 538.2 V550.9 M1812.18 538.2 V550.9 M1815.75 538.2 V550.9 M1819.32 538.2 V550.9 M1822.90 538.2 V550.9 M1826.47 538.2 V550.9 M1830.04 538.2 V550.9 M1833.61 538.2 V550.9 M1837.18 538.2 V550.9 M1840.75 538.2 V550.9 M1844.32 538.2 V550.9 M1847.89 538.2 V550.9 M1851.46 538.2 V550.9 M1855.04 538.2 V550.9 M1858.61 538.2 V550.9 M1862.18 538.2 V550.9 M1865.75 538.2 V550.9 M1869.32 538.2 V550.9 M1872.89 538.2 V550.9 M1876.46 538.2 V550.9" stroke="#3a3a3a" stroke-width="0.95" fill="none"/>
<path d="M1880.03 538.2 V550.9 M1883.60 538.2 V550.9 M1887.18 538.2 V550.9 M1890.75 538.2 V550.9 M1894.32 538.2 V550.9 M1897.89 538.2 V550.9 M1901.46 538.2 V550.9 M1905.03 538.2 V550.9 M1908.60 538.2 V550.9 M1912.17 538.2 V550.9 M1915.74 538.2 V550.9 M1919.32 538.2 V550.9 M1922.89 538.2 V550.9 M1926.46 538.2 V550.9 M1930.03 538.2 V550.9 M1933.60 538.2 V550.9" stroke="#aeaeae" stroke-width="0.7" fill="none"/>
<path d="M1611.6 538.1 H1880" stroke="#3a3a3a" stroke-width="0.9"/>
<path d="M1880 538.1 H1933.8" stroke="#aaa" stroke-width="0.7"/>
<path d="M1072.2 556.4 V646 M1072.2 655 V668 M1072.2 672.5 V673.5 M1072.2 677 V707.8" stroke="#a8a8a8" stroke-width="0.8" fill="none"/>
<path d="M1994.4 621 V681 M1994.4 706 V728 M1994.4 731.5 V733.5 M1994.4 737 V818" stroke="#8c8c8c" stroke-width="0.8" fill="none"/>
<rect x="1986.6" y="605.6" width="1.2" height="1" fill="#bbb"/>
<g transform="translate(594.1 504.9)"><g clip-path="url(#p1c)">
<g filter="url(#p1b)"><g transform="translate(0.9 1.6)">
<rect x="-5.0" y="-5.0" width="410.0" height="310.0" fill="#c0c0c0"/>
<ellipse cx="100.0" cy="48.0" rx="80.0" ry="28.0" fill="#dedede" transform="rotate(-8 100.0 48.0)"/>
<ellipse cx="150.0" cy="78.0" rx="62.0" ry="24.0" fill="#dcdcdc" transform="rotate(-20 150.0 78.0)"/>
<ellipse cx="55.0" cy="20.0" rx="60.0" ry="16.0" fill="#cccccc"/>
<ellipse cx="28.0" cy="88.0" rx="42.0" ry="22.0" fill="#a8a8a8"/>
<ellipse cx="160.0" cy="12.0" rx="45.0" ry="12.0" fill="#acacac"/>
<ellipse cx="25.0" cy="150.0" rx="45.0" ry="30.0" fill="#b2b2b2"/>
<ellipse cx="60.0" cy="118.0" rx="40.0" ry="14.0" fill="#cdcdcd" transform="rotate(-15 60.0 118.0)"/>
<ellipse cx="185.0" cy="42.0" rx="20.0" ry="12.0" fill="#cdcdcd"/>
<ellipse cx="104.0" cy="74.0" rx="40.0" ry="24.0" fill="#343434" transform="rotate(-38 104.0 74.0)"/>
<ellipse cx="126.0" cy="57.0" rx="22.0" ry="13.0" fill="#323232" transform="rotate(-25 126.0 57.0)"/>
<ellipse cx="84.0" cy="92.0" rx="22.0" ry="13.0" fill="#383838" transform="rotate(-30 84.0 92.0)"/>
<ellipse cx="72.0" cy="121.0" rx="11.0" ry="8.0" fill="#3a3a3a" transform="rotate(-30 72.0 121.0)"/>
<ellipse cx="70.0" cy="104.0" rx="8.0" ry="5.0" fill="#3c3c3c"/>
<polygon points="-2.0,116.0 12.0,119.0 28.0,130.0 42.0,143.0 54.0,158.0 54.0,186.0 30.0,205.0 -2.0,205.0" fill="#343434"/>
<ellipse cx="20.0" cy="135.0" rx="14.0" ry="8.0" fill="#464646" transform="rotate(30 20.0 135.0)"/>
<polygon points="214.0,-2.0 402.0,-2.0 402.0,302.0 -2.0,302.0 -2.0,204.0 30.0,204.0 53.0,185.0 53.0,154.0" fill="#b4b4b4"/>
<polygon points="53.0,154.0 53.0,185.0 30.0,204.0 60.0,204.0 60.0,160.0" fill="#969696"/>
<line x1="216.0" y1="-3.0" x2="51.0" y2="157.0" stroke="#3a3a3a" stroke-width="3.2"/>
<line x1="206.0" y1="-2.0" x2="60.0" y2="139.0" stroke="#969696" stroke-width="2.0"/>
<line x1="150.0" y1="40.0" x2="64.0" y2="122.0" stroke="#464646" stroke-width="1.6"/>
<rect x="172.0" y="20.0" width="3.5" height="12.0" fill="#ebebeb"/>
<polygon points="170.0,8.0 200.0,-2.0 214.0,-2.0 178.0,30.0" fill="#787878"/>
<rect x="100.0" y="112.0" width="17.0" height="34.0" fill="#787878"/>
<rect x="102.0" y="114.0" width="13.0" height="14.0" fill="#646464"/>
<line x1="119.5" y1="86.0" x2="119.5" y2="152.0" stroke="#787878" stroke-width="3"/>
<line x1="196.5" y1="28.0" x2="196.5" y2="192.0" stroke="#808080" stroke-width="3.2"/>
<rect x="166.0" y="66.0" width="4.5" height="36.0" fill="#969696"/>
<line x1="120.0" y1="150.0" x2="200.0" y2="88.0" stroke="#878787" stroke-width="1.2"/>
<rect x="117.0" y="158.0" width="7.0" height="28.0" fill="#646464"/>
<rect x="145.0" y="146.0" width="13.0" height="31.0" fill="#c4c4c4"/>
<rect x="147.0" y="148.0" width="4.0" height="26.0" fill="#a0a0a0"/>
<rect x="153.0" y="148.0" width="3.5" height="26.0" fill="#a5a5a5"/>
<rect x="66.0" y="189.0" width="5.0" height="14.0" fill="#5c5c5c"/>
<rect x="97.0" y="146.0" width="4.0" height="15.0" fill="#696969"/>
<rect x="49.0" y="186.0" width="3.0" height="17.0" fill="#6e6e6e"/>
<line x1="60.0" y1="200.0" x2="118.0" y2="160.0" stroke="#8c8c8c" stroke-width="1.2"/>
<polygon points="217.0,-2.0 358.0,-2.0 358.0,50.0 283.0,96.0 283.0,141.0 232.0,152.0 217.0,152.0" fill="#646464"/>
<polygon points="217.0,80.0 232.0,78.0 232.0,152.0 217.0,152.0" fill="#808080"/>
<rect x="236.0" y="20.0" width="6.0" height="56.0" fill="#4e4e4e"/>
<rect x="236.0" y="18.0" width="36.0" height="4.0" fill="#505050"/>
<rect x="243.5" y="22.0" width="38.0" height="81.0" fill="#8a8a8a"/>
<rect x="248.0" y="30.0" width="30.0" height="69.0" fill="#585858"/>
<rect x="261.0" y="30.0" width="4.5" height="69.0" fill="#7c7c7c"/>
<rect x="249.0" y="101.0" width="34.5" height="39.0" fill="#424242"/>
<line x1="249.0" y1="101.0" x2="283.0" y2="101.0" stroke="#787878" stroke-width="1.5"/>
<ellipse cx="226.0" cy="88.0" rx="10.8" ry="9.2" fill="#dedede"/>
<line x1="226.3" y1="84.0" x2="227.5" y2="112.0" stroke="#3c3c3c" stroke-width="2"/>
<ellipse cx="229.0" cy="105.0" rx="4.0" ry="4.0" fill="#3c3c3c"/>
<rect x="228.0" y="108.0" width="4.0" height="42.0" fill="#5f5f5f"/>
<rect x="286.0" y="51.0" width="27.0" height="16.5" fill="#bebebe"/>
<ellipse cx="296.5" cy="59.0" rx="7.0" ry="6.5" fill="#4e4e4e"/>
<rect x="286.0" y="67.5" width="32.0" height="3.5" fill="#555555"/>
<ellipse cx="284.5" cy="42.0" rx="3.0" ry="8.0" fill="#3c3c3c"/>
<polygon points="272.0,98.0 356.0,49.0 358.0,78.0 272.0,132.0" fill="#686868"/>
<line x1="274.0" y1="97.8" x2="274.0" y2="130.7" stroke="#343434" stroke-width="1.5"/>
<line x1="278.1" y1="95.4" x2="278.1" y2="128.1" stroke="#343434" stroke-width="1.5"/>
<line x1="282.2" y1="93.1" x2="282.2" y2="125.4" stroke="#343434" stroke-width="1.5"/>
<line x1="286.3" y1="90.7" x2="286.3" y2="122.8" stroke="#343434" stroke-width="1.5"/>
<line x1="290.4" y1="88.3" x2="290.4" y2="120.2" stroke="#343434" stroke-width="1.5"/>
<line x1="294.5" y1="85.9" x2="294.5" y2="117.5" stroke="#343434" stroke-width="1.5"/>
<line x1="298.6" y1="83.5" x2="298.6" y2="114.9" stroke="#343434" stroke-width="1.5"/>
<line x1="302.7" y1="81.1" x2="302.7" y2="112.3" stroke="#343434" stroke-width="1.5"/>
<line x1="306.8" y1="78.7" x2="306.8" y2="109.6" stroke="#343434" stroke-width="1.5"/>
<line x1="310.9" y1="76.3" x2="310.9" y2="107.0" stroke="#343434" stroke-width="1.5"/>
<line x1="315.0" y1="73.9" x2="315.0" y2="104.4" stroke="#343434" stroke-width="1.5"/>
<line x1="319.1" y1="71.5" x2="319.1" y2="101.7" stroke="#343434" stroke-width="1.5"/>
<line x1="323.2" y1="69.1" x2="323.2" y2="99.1" stroke="#343434" stroke-width="1.5"/>
<line x1="327.3" y1="66.7" x2="327.3" y2="96.4" stroke="#343434" stroke-width="1.5"/>
<line x1="331.4" y1="64.4" x2="331.4" y2="93.8" stroke="#343434" stroke-width="1.5"/>
<line x1="335.5" y1="62.0" x2="335.5" y2="91.2" stroke="#343434" stroke-width="1.5"/>
<line x1="339.6" y1="59.6" x2="339.6" y2="88.5" stroke="#343434" stroke-width="1.5"/>
<line x1="343.7" y1="57.2" x2="343.7" y2="85.9" stroke="#343434" stroke-width="1.5"/>
<line x1="347.8" y1="54.8" x2="347.8" y2="83.3" stroke="#343434" stroke-width="1.5"/>
<line x1="351.9" y1="52.4" x2="351.9" y2="80.6" stroke="#343434" stroke-width="1.5"/>
<line x1="356.0" y1="50.0" x2="356.0" y2="78.0" stroke="#343434" stroke-width="1.5"/>
<line x1="272.0" y1="98.0" x2="356.0" y2="49.0" stroke="#323232" stroke-width="1.6"/>
<polygon points="232.0,152.0 272.0,132.0 358.0,78.0 402.0,58.0 402.0,158.0 266.0,180.0 199.0,194.0 199.0,150.0" fill="#787878"/>
<line x1="272.0" y1="133.0" x2="358.0" y2="79.0" stroke="#a0a0a0" stroke-width="1.5"/>
<rect x="320.5" y="104.0" width="3.5" height="26.0" fill="#cdcdcd"/>
<polygon points="-2.0,204.0 100.0,204.0 145.0,202.5 175.0,199.0 200.0,193.0 266.0,179.0 402.0,155.0 402.0,302.0 -2.0,302.0" fill="#8c8c8c"/>
<polygon points="120.0,203.0 175.0,199.0 200.0,193.0 266.0,179.0 402.0,155.0 402.0,302.0 150.0,302.0" fill="#6c6c6c" opacity="0.8"/>
<polygon points="230.0,187.0 266.0,179.0 402.0,155.0 402.0,302.0 250.0,302.0" fill="#646464" opacity="0.8"/>
<line x1="-2.0" y1="204.5" x2="100.0" y2="204.5" stroke="#5f5f5f" stroke-width="1.6"/>
<line x1="199.0" y1="192.5" x2="275.0" y2="159.5" stroke="#c8c8c8" stroke-width="2.6"/>
<line x1="204.0" y1="192.5" x2="277.0" y2="161.5" stroke="#464646" stroke-width="1.5"/>
<polygon points="357.0,-2.0 402.0,-2.0 402.0,82.0 386.0,84.0 371.0,77.0 360.0,64.0 349.0,52.0 341.0,38.0 347.0,20.0" fill="#343434"/>
<ellipse cx="372.0" cy="40.0" rx="22.0" ry="30.0" fill="#2e2e2e"/>
<ellipse cx="388.0" cy="100.0" rx="14.0" ry="26.0" fill="#5c5c5c" opacity="0.8"/>
<ellipse cx="372.0" cy="95.0" rx="6.0" ry="18.0" fill="#505050" opacity="0.8"/>
<rect x="357.0" y="-2.0" width="15.0" height="22.0" fill="#262626"/>
<polygon points="318.6,-2.0 323.6,-2.0 330.0,80.0 343.5,302.0 332.5,302.0 326.0,150.0" fill="#343434"/>
<polygon points="326.5,150.0 330.0,150.0 337.5,302.0 333.0,302.0" fill="#5f5f5f"/>
<polygon points="359.6,157.0 365.6,156.0 369.8,302.0 361.0,302.0" fill="#343434"/>
<ellipse cx="54.0" cy="246.0" rx="13.0" ry="30.0" fill="#303030" transform="rotate(8 54.0 246.0)"/>
<ellipse cx="40.0" cy="232.0" rx="20.0" ry="8.0" fill="#4e4e4e" transform="rotate(-25 40.0 232.0)" opacity="0.8"/>
<ellipse cx="36.0" cy="252.0" rx="16.0" ry="7.0" fill="#545454" transform="rotate(20 36.0 252.0)" opacity="0.7"/>
<ellipse cx="159.0" cy="212.0" rx="10.0" ry="25.0" fill="#3c3c3c" transform="rotate(6 159.0 212.0)"/>
<ellipse cx="146.0" cy="280.0" rx="17.0" ry="18.0" fill="#3a3a3a"/>
<ellipse cx="94.0" cy="268.0" rx="11.0" ry="17.0" fill="#505050"/>
<ellipse cx="84.0" cy="262.0" rx="7.0" ry="12.0" fill="#4e4e4e"/>
<ellipse cx="70.0" cy="285.0" rx="7.0" ry="12.0" fill="#545454"/>
<ellipse cx="124.0" cy="212.0" rx="5.0" ry="10.0" fill="#545454"/>
<ellipse cx="6.0" cy="245.0" rx="6.0" ry="14.0" fill="#696969"/>
<ellipse cx="348.0" cy="130.0" rx="9.0" ry="15.0" fill="#4e4e4e"/>
<ellipse cx="323.0" cy="136.0" rx="6.0" ry="10.0" fill="#5c5c5c"/>
<ellipse cx="253.0" cy="140.0" rx="5.0" ry="9.0" fill="#5c5c5c"/>
<ellipse cx="262.0" cy="270.0" rx="10.0" ry="12.0" fill="#585858" opacity="0.8"/>
<polygon points="-2.0,261.0 32.0,260.0 46.0,268.0 58.0,292.0 62.0,302.0 -2.0,302.0" fill="#303030"/>
<polygon points="3.0,268.0 33.0,266.0 43.0,284.0 3.0,286.0" fill="#5c5c5c"/>
<polygon points="-2.0,288.0 55.0,290.0 62.0,302.0 -2.0,302.0" fill="#3e3e3e"/>
</g></g>
<rect x="0" y="0" width="401.8" height="300.9" filter="url(#p1n)" opacity="0.2" style="mix-blend-mode:overlay"/>
</g>
<rect x="0" y="0" width="401.8" height="300.9" fill="none" stroke="#9a9a9a" stroke-width="0.8"/>
</g>
<g transform="translate(586.1 961.1)"><g clip-path="url(#p2c)">
<g filter="url(#p2b)"><g transform="translate(0.8 0.5)">
<rect x="-5.0" y="-5.0" width="410.0" height="310.0" fill="#bababa"/>
<rect x="-5.0" y="-5.0" width="19.0" height="95.0" fill="#9e9e9e"/>
<ellipse cx="72.0" cy="22.0" rx="30.0" ry="40.0" fill="#d6d6d6" transform="rotate(25 72.0 22.0)"/>
<ellipse cx="25.0" cy="40.0" rx="22.0" ry="30.0" fill="#acacac"/>
<polygon points="215.0,-3.0 402.0,-3.0 402.0,64.0 382.0,72.0 364.0,66.0 345.0,44.0 300.0,24.0 250.0,12.0" fill="#747474"/>
<ellipse cx="330.0" cy="18.0" rx="40.0" ry="16.0" fill="#6c6c6c"/>
<ellipse cx="230.0" cy="6.0" rx="30.0" ry="9.0" fill="#afafaf"/>
<ellipse cx="300.0" cy="30.0" rx="25.0" ry="8.0" fill="#878787"/>
<polygon points="360.0,66.0 402.0,58.0 402.0,152.0 366.0,152.0" fill="#e2e2e2"/>
<ellipse cx="385.0" cy="70.0" rx="18.0" ry="10.0" fill="#aaaaaa"/>
<rect x="389.0" y="5.0" width="8.0" height="50.0" fill="#5f5f5f" opacity="0.7"/>
<polygon points="101.0,0.0 104.0,40.0 104.0,120.0 62.0,152.0 27.0,152.0 27.0,100.0 43.0,82.0 70.0,45.0" fill="#484848"/>
<polygon points="101.0,0.0 106.0,2.0 50.0,84.0 43.0,82.0" fill="#3c3c3c"/>
<rect x="-2.0" y="75.0" width="29.0" height="77.0" fill="#2e2e2e"/>
<line x1="5.0" y1="74.0" x2="18.0" y2="56.0" stroke="#8c8c8c" stroke-width="3"/>
<line x1="-2.0" y1="75.0" x2="28.0" y2="79.0" stroke="#787878" stroke-width="2"/>
<rect x="27.5" y="81.0" width="7.0" height="11.5" fill="#f0f0f0"/>
<rect x="90.0" y="52.0" width="8.0" height="43.0" fill="#303030"/>
<polygon points="100.0,1.5 354.0,39.0 355.5,58.0 97.0,20.5" fill="#d0d0d0"/>
<line x1="121.0" y1="9.6" x2="121.0" y2="21.1" stroke="#969696" stroke-width="2.0"/>
<line x1="128.6" y1="10.7" x2="128.6" y2="22.2" stroke="#969696" stroke-width="2.0"/>
<line x1="136.1" y1="11.8" x2="136.1" y2="23.3" stroke="#969696" stroke-width="2.0"/>
<line x1="143.7" y1="12.9" x2="143.7" y2="24.4" stroke="#969696" stroke-width="2.0"/>
<line x1="151.2" y1="14.1" x2="151.2" y2="25.6" stroke="#969696" stroke-width="2.0"/>
<line x1="158.8" y1="15.2" x2="158.8" y2="26.7" stroke="#969696" stroke-width="2.0"/>
<line x1="166.3" y1="16.3" x2="166.3" y2="27.8" stroke="#969696" stroke-width="2.0"/>
<line x1="173.8" y1="17.4" x2="173.8" y2="28.9" stroke="#969696" stroke-width="2.0"/>
<line x1="181.4" y1="18.5" x2="181.4" y2="30.0" stroke="#969696" stroke-width="2.0"/>
<line x1="188.9" y1="19.6" x2="188.9" y2="31.1" stroke="#969696" stroke-width="2.0"/>
<line x1="196.5" y1="20.7" x2="196.5" y2="32.2" stroke="#969696" stroke-width="2.0"/>
<line x1="204.1" y1="21.9" x2="204.1" y2="33.4" stroke="#969696" stroke-width="2.0"/>
<line x1="211.6" y1="23.0" x2="211.6" y2="34.5" stroke="#969696" stroke-width="2.0"/>
<line x1="219.1" y1="24.1" x2="219.1" y2="35.6" stroke="#969696" stroke-width="2.0"/>
<line x1="226.7" y1="25.2" x2="226.7" y2="36.7" stroke="#969696" stroke-width="2.0"/>
<line x1="234.2" y1="26.3" x2="234.2" y2="37.8" stroke="#969696" stroke-width="2.0"/>
<line x1="241.8" y1="27.4" x2="241.8" y2="38.9" stroke="#969696" stroke-width="2.0"/>
<line x1="249.3" y1="28.5" x2="249.3" y2="40.0" stroke="#969696" stroke-width="2.0"/>
<line x1="256.9" y1="29.7" x2="256.9" y2="41.2" stroke="#969696" stroke-width="2.0"/>
<line x1="264.4" y1="30.8" x2="264.4" y2="42.3" stroke="#969696" stroke-width="2.0"/>
<line x1="272.0" y1="31.9" x2="272.0" y2="43.4" stroke="#969696" stroke-width="2.0"/>
<line x1="279.5" y1="33.0" x2="279.5" y2="44.5" stroke="#969696" stroke-width="2.0"/>
<line x1="287.1" y1="34.1" x2="287.1" y2="45.6" stroke="#969696" stroke-width="2.0"/>
<line x1="294.6" y1="35.2" x2="294.6" y2="46.7" stroke="#969696" stroke-width="2.0"/>
<line x1="302.2" y1="36.4" x2="302.2" y2="47.9" stroke="#969696" stroke-width="2.0"/>
<line x1="309.8" y1="37.5" x2="309.8" y2="49.0" stroke="#969696" stroke-width="2.0"/>
<line x1="317.3" y1="38.6" x2="317.3" y2="50.1" stroke="#969696" stroke-width="2.0"/>
<line x1="324.9" y1="39.7" x2="324.9" y2="51.2" stroke="#969696" stroke-width="2.0"/>
<line x1="332.4" y1="40.8" x2="332.4" y2="52.3" stroke="#969696" stroke-width="2.0"/>
<line x1="339.9" y1="41.9" x2="339.9" y2="53.4" stroke="#969696" stroke-width="2.0"/>
<line x1="347.5" y1="43.0" x2="347.5" y2="54.5" stroke="#969696" stroke-width="2.0"/>
<line x1="100.0" y1="2.0" x2="354.0" y2="39.5" stroke="#aaaaaa" stroke-width="1.5"/>
<polygon points="97.0,20.5 355.5,58.0 365.0,61.0 358.0,68.0 110.0,33.0" fill="#9e9e9e"/>
<polygon points="104.0,33.0 358.0,68.0 346.0,78.0 123.0,46.0 104.0,40.0" fill="#c4c4c4"/>
<line x1="97.0" y1="21.0" x2="356.0" y2="58.5" stroke="#6e6e6e" stroke-width="1.5"/>
<polygon points="104.0,40.0 123.0,46.0 123.0,119.0 104.0,119.0" fill="#cacaca"/>
<polygon points="100.0,30.0 105.0,33.0 105.0,119.0 101.0,119.0" fill="#787878"/>
<polygon points="346.0,78.0 365.0,61.0 367.5,152.0 354.5,152.0" fill="#c4c4c4"/>
<polygon points="100.0,112.0 356.0,140.0 402.0,146.0 402.0,180.0 48.0,162.0 48.0,150.0 62.0,150.0" fill="#3a3a3a"/>
<polygon points="123.0,46.0 346.0,78.0 354.5,152.0 356.0,162.0 123.0,126.0" fill="#343434"/>
<polygon points="249.0,83.2 284.0,87.0 289.2,134.2 253.0,118.5" fill="#e4e4e4"/>
<polygon points="252.6,87.0 281.0,90.0 285.0,127.5 256.0,115.5" fill="#303030"/>
<line x1="266.5" y1="88.5" x2="269.8" y2="121.0" stroke="#c8c8c8" stroke-width="2"/>
<polygon points="258.0,116.0 284.0,127.0 284.0,132.0 258.0,121.0" fill="#787878"/>
<rect x="153.0" y="121.0" width="25.0" height="27.0" fill="#767676"/>
<rect x="153.0" y="121.0" width="25.0" height="4.0" fill="#bebebe"/>
<rect x="237.0" y="123.0" width="16.0" height="25.0" fill="#7d7d7d"/>
<rect x="216.0" y="113.0" width="34.0" height="11.0" fill="#5c5c5c"/>
<rect x="240.0" y="124.0" width="13.0" height="4.5" fill="#c8c8c8"/>
<ellipse cx="95.0" cy="120.0" rx="34.0" ry="30.0" fill="#383838"/>
<ellipse cx="125.0" cy="135.0" rx="20.0" ry="18.0" fill="#3e3e3e"/>
<ellipse cx="60.0" cy="140.0" rx="20.0" ry="14.0" fill="#323232"/>
<rect x="123.0" y="108.0" width="8.0" height="24.0" fill="#969696" opacity="0.7"/>
<line x1="115.0" y1="131.0" x2="356.0" y2="146.0" stroke="#2a2a2a" stroke-width="2.2"/>
<line x1="115.0" y1="139.0" x2="300.0" y2="150.0" stroke="#3c3c3c" stroke-width="1.5"/>
<line x1="358.0" y1="147.0" x2="358.0" y2="156.0" stroke="#ebebeb" stroke-width="2.2"/>
<line x1="362.3" y1="147.0" x2="362.3" y2="156.0" stroke="#ebebeb" stroke-width="2.2"/>
<line x1="366.6" y1="147.0" x2="366.6" y2="156.0" stroke="#ebebeb" stroke-width="2.2"/>
<line x1="370.9" y1="147.0" x2="370.9" y2="156.0" stroke="#ebebeb" stroke-width="2.2"/>
<line x1="375.2" y1="147.0" x2="375.2" y2="156.0" stroke="#ebebeb" stroke-width="2.2"/>
<line x1="379.5" y1="147.0" x2="379.5" y2="156.0" stroke="#ebebeb" stroke-width="2.2"/>
<line x1="383.8" y1="147.0" x2="383.8" y2="156.0" stroke="#ebebeb" stroke-width="2.2"/>
<line x1="388.1" y1="147.0" x2="388.1" y2="156.0" stroke="#ebebeb" stroke-width="2.2"/>
<line x1="392.4" y1="147.0" x2="392.4" y2="156.0" stroke="#ebebeb" stroke-width="2.2"/>
<line x1="354.0" y1="144.5" x2="398.0" y2="148.5" stroke="#323232" stroke-width="2"/>
<polygon points="48.0,154.0 402.0,174.0 402.0,302.0 48.0,302.0" fill="#505050"/>
<polygon points="47.0,146.0 402.0,166.0 402.0,188.0 300.0,177.0 200.0,166.0 48.0,158.0" fill="#282828"/>
<polygon points="200.0,168.0 402.0,182.0 402.0,198.0 300.0,186.0" fill="#343434" opacity="0.8"/>
<ellipse cx="291.0" cy="155.5" rx="10.0" ry="3.4" fill="#d7d7d7" transform="rotate(8 291.0 155.5)"/>
<ellipse cx="342.0" cy="161.5" rx="10.0" ry="3.0" fill="#c8c8c8" transform="rotate(8 342.0 161.5)"/>
<ellipse cx="385.0" cy="168.0" rx="10.0" ry="3.0" fill="#787878" transform="rotate(8 385.0 168.0)"/>
<rect x="-2.0" y="150.0" width="64.0" height="152.0" fill="#3e3e3e"/>
<rect x="19.0" y="168.0" width="29.0" height="72.0" fill="#282828"/>
<rect x="48.0" y="160.0" width="12.0" height="125.0" fill="#464646"/>
<rect x="-2.0" y="150.0" width="10.0" height="25.0" fill="#696969"/>
<rect x="28.0" y="148.0" width="12.0" height="10.0" fill="#828282"/>
<rect x="-2.0" y="243.0" width="64.0" height="39.0" fill="#464646"/>
<rect x="60.0" y="240.0" width="6.0" height="42.0" fill="#5a5a5a"/>
<polygon points="-2.0,284.0 70.0,280.0 130.0,290.0 160.0,302.0 -2.0,302.0" fill="#2e2e2e"/>
<ellipse cx="75.0" cy="245.0" rx="8.0" ry="12.0" fill="#626262"/>
<polygon points="184.0,94.0 194.5,94.0 197.0,160.0 203.5,302.0 196.5,302.0 189.0,165.0" fill="#6c6c6c"/>
<polygon points="190.0,165.0 193.0,165.0 199.5,302.0 197.0,302.0" fill="#8c8c8c"/>
<rect x="181.0" y="120.0" width="17.0" height="4.0" fill="#464646"/>
<rect x="186.0" y="155.0" width="14.0" height="10.0" fill="#3c3c3c"/>
</g></g>
<rect x="0" y="0" width="399.2" height="299.7" filter="url(#p2n)" opacity="0.13" style="mix-blend-mode:overlay"/>
</g>
<path d="M0.7 299.7 V0.7" fill="none" stroke="#5a5a5a" stroke-width="1.2"/><path d="M0 298.9 H399.2" fill="none" stroke="#262626" stroke-width="1.6"/><path d="M0 0.75 H398.4 V299.7" fill="none" stroke="#060606" stroke-width="1.5"/>
</g>
<g transform="translate(1597.1 962.8)"><g clip-path="url(#p3c)">
<g filter="url(#p3b)"><g transform="translate(0.2 0.3)">
<rect x="-5.0" y="-5.0" width="410.0" height="310.0" fill="#7e7e7e"/>
<ellipse cx="75.0" cy="20.0" rx="22.0" ry="30.0" fill="#8c8c8c" transform="rotate(35 75.0 20.0)" opacity="0.6"/>
<ellipse cx="330.0" cy="8.0" rx="60.0" ry="8.0" fill="#808080"/>
<ellipse cx="130.0" cy="80.0" rx="24.0" ry="16.0" fill="#4a4a4a"/>
<ellipse cx="152.0" cy="86.0" rx="14.0" ry="9.0" fill="#5c5c5c"/>
<ellipse cx="190.0" cy="72.0" rx="14.0" ry="24.0" fill="#424242"/>
<ellipse cx="208.0" cy="76.0" rx="12.0" ry="22.0" fill="#3c3c3c"/>
<ellipse cx="118.0" cy="58.0" rx="9.0" ry="10.0" fill="#464646"/>
<polygon points="92.0,92.0 236.0,94.0 236.0,152.0 92.0,156.0" fill="#929292"/>
<line x1="92.0" y1="93.0" x2="236.0" y2="95.0" stroke="#4e4e4e" stroke-width="2.6"/>
<path d="M100 153 C150 153 185 152 205 147 C225 141 236 132 241 122 L300 122 L300 210 L100 200 Z" fill="#b4b4b4"/>
<path d="M104 153 C150 153 185 152 205 147 C225 141 236 132 241 122" fill="none" stroke="#5f5f5f" stroke-width="2.6"/>
<polygon points="233.0,85.0 279.0,87.0 279.0,124.0 236.0,124.0" fill="#4c4c4c"/>
<polygon points="198.0,96.0 237.0,98.0 237.0,126.0 222.0,142.0 205.0,148.0 198.0,150.0" fill="#7e7e7e"/>
<line x1="198.0" y1="96.0" x2="237.0" y2="98.5" stroke="#505050" stroke-width="2"/>
<line x1="228.0" y1="55.0" x2="231.0" y2="96.0" stroke="#5f5f5f" stroke-width="1.2"/>
<line x1="240.0" y1="66.0" x2="244.0" y2="122.0" stroke="#5f5f5f" stroke-width="1.2"/>
<polygon points="-2.0,-2.0 38.0,-2.0 60.0,8.0 84.0,16.0 100.0,32.0 112.0,46.0 128.0,56.0 130.0,70.0 118.0,84.0 104.0,96.0 110.0,120.0 124.0,150.0 140.0,160.0 132.0,176.0 112.0,190.0 103.0,192.0 -2.0,178.0" fill="#343434"/>
<ellipse cx="118.0" cy="160.0" rx="22.0" ry="22.0" fill="#545454" opacity="0.75"/>
<ellipse cx="70.0" cy="60.0" rx="40.0" ry="30.0" fill="#3e3e3e" opacity="0.6"/>
<ellipse cx="40.0" cy="120.0" rx="35.0" ry="35.0" fill="#2c2c2c" opacity="0.7"/>
<ellipse cx="95.0" cy="140.0" rx="14.0" ry="20.0" fill="#464646" opacity="0.6"/>
<line x1="0.0" y1="50.0" x2="120.0" y2="68.0" stroke="#6e6e6e" stroke-width="1.3"/>
<line x1="0.0" y1="28.0" x2="110.0" y2="44.0" stroke="#5f5f5f" stroke-width="1.0"/>
<line x1="120.0" y1="68.0" x2="400.0" y2="96.0" stroke="#8c8c8c" stroke-width="0.8"/>
<polygon points="312.0,17.0 402.0,17.0 402.0,31.0 314.0,31.0" fill="#ececec"/>
<line x1="327.5" y1="20.5" x2="327.5" y2="29.5" stroke="#787878" stroke-width="2.0"/>
<line x1="333.8" y1="20.5" x2="333.8" y2="29.5" stroke="#787878" stroke-width="2.0"/>
<line x1="340.0" y1="20.5" x2="340.0" y2="29.5" stroke="#787878" stroke-width="2.0"/>
<line x1="346.2" y1="20.5" x2="346.2" y2="29.5" stroke="#787878" stroke-width="2.0"/>
<line x1="352.5" y1="20.5" x2="352.5" y2="29.5" stroke="#787878" stroke-width="2.0"/>
<line x1="358.8" y1="20.5" x2="358.8" y2="29.5" stroke="#787878" stroke-width="2.0"/>
<line x1="365.0" y1="20.5" x2="365.0" y2="29.5" stroke="#787878" stroke-width="2.0"/>
<line x1="371.2" y1="20.5" x2="371.2" y2="29.5" stroke="#787878" stroke-width="2.0"/>
<line x1="377.5" y1="20.5" x2="377.5" y2="29.5" stroke="#787878" stroke-width="2.0"/>
<line x1="383.8" y1="20.5" x2="383.8" y2="29.5" stroke="#787878" stroke-width="2.0"/>
<line x1="390.0" y1="20.5" x2="390.0" y2="29.5" stroke="#787878" stroke-width="2.0"/>
<line x1="396.2" y1="20.5" x2="396.2" y2="29.5" stroke="#787878" stroke-width="2.0"/>
<polygon points="314.0,31.0 402.0,31.0 402.0,41.0 318.0,41.0" fill="#7a7a7a"/>
<polygon points="317.5,40.7 402.0,40.7 402.0,47.5 318.0,47.5" fill="#eeeeee"/>
<polygon points="332.0,48.0 402.0,48.0 402.0,104.0 338.0,104.0" fill="#646464"/>
<polygon points="317.5,47.0 331.5,47.0 338.8,102.0 323.0,102.0" fill="#eeeeee"/>
<polygon points="313.0,20.0 318.0,47.0 323.0,102.0 300.0,112.0 275.0,118.0 273.0,92.0" fill="#606060"/>
<line x1="312.5" y1="18.0" x2="272.5" y2="91.0" stroke="#ececec" stroke-width="3.2"/>
<line x1="309.5" y1="17.0" x2="269.5" y2="90.0" stroke="#464646" stroke-width="1.6"/>
<polygon points="300.0,62.0 314.0,56.0 316.0,84.0 304.0,88.0" fill="#3c3c3c"/>
<ellipse cx="292.0" cy="100.0" rx="12.0" ry="14.0" fill="#464646" opacity="0.85"/>
<polygon points="306.0,101.0 402.0,100.0 402.0,131.0 310.0,131.0" fill="#707070"/>
<polygon points="311.0,113.0 398.0,113.0 396.0,131.0 312.0,131.0" fill="#545454"/>
<line x1="314.0" y1="114.0" x2="315.0" y2="131.0" stroke="#787878" stroke-width="1.4"/>
<line x1="320.0" y1="114.0" x2="321.0" y2="131.0" stroke="#787878" stroke-width="1.4"/>
<line x1="326.0" y1="114.0" x2="327.0" y2="131.0" stroke="#787878" stroke-width="1.4"/>
<line x1="332.0" y1="114.0" x2="333.0" y2="131.0" stroke="#787878" stroke-width="1.4"/>
<line x1="338.0" y1="114.0" x2="339.0" y2="131.0" stroke="#787878" stroke-width="1.4"/>
<line x1="344.0" y1="114.0" x2="345.0" y2="131.0" stroke="#787878" stroke-width="1.4"/>
<line x1="350.0" y1="114.0" x2="351.0" y2="131.0" stroke="#787878" stroke-width="1.4"/>
<line x1="356.0" y1="114.0" x2="357.0" y2="131.0" stroke="#787878" stroke-width="1.4"/>
<line x1="362.0" y1="114.0" x2="363.0" y2="131.0" stroke="#787878" stroke-width="1.4"/>
<line x1="368.0" y1="114.0" x2="369.0" y2="131.0" stroke="#787878" stroke-width="1.4"/>
<line x1="374.0" y1="114.0" x2="375.0" y2="131.0" stroke="#787878" stroke-width="1.4"/>
<line x1="380.0" y1="114.0" x2="381.0" y2="131.0" stroke="#787878" stroke-width="1.4"/>
<line x1="386.0" y1="114.0" x2="387.0" y2="131.0" stroke="#787878" stroke-width="1.4"/>
<line x1="392.0" y1="114.0" x2="393.0" y2="131.0" stroke="#787878" stroke-width="1.4"/>
<rect x="358.5" y="101.0" width="5.5" height="19.0" fill="#e6e6e6"/>
<rect x="390.0" y="84.0" width="6.0" height="44.0" fill="#e1e1e1"/>
<rect x="375.0" y="69.0" width="2.0" height="31.0" fill="#c8c8c8"/>
<line x1="308.0" y1="102.0" x2="402.0" y2="100.0" stroke="#3c3c3c" stroke-width="1.6"/>
<rect x="336.0" y="98.0" width="7.0" height="22.0" fill="#3c3c3c"/>
<line x1="310.0" y1="132.0" x2="400.0" y2="131.0" stroke="#343434" stroke-width="2.4"/>
<polygon points="310.0,133.0 402.0,132.0 402.0,234.0 304.0,222.0 298.0,150.0" fill="#b0b0b0"/>
<polygon points="296.5,140.0 313.5,133.0 313.5,220.0 298.0,220.0" fill="#a5a5a5"/>
<line x1="308.0" y1="101.0" x2="282.0" y2="146.0" stroke="#343434" stroke-width="4"/>
<polygon points="280.0,126.0 292.0,126.0 286.0,140.0 280.0,146.0" fill="#e8e8e8"/>
<rect x="240.5" y="131.0" width="27.0" height="21.0" fill="#dadada"/>
<ellipse cx="251.0" cy="142.0" rx="6.8" ry="6.8" fill="#4c4c4c"/>
<rect x="238.0" y="152.5" width="32.0" height="3.5" fill="#6e6e6e"/>
<polygon points="284.0,147.0 299.0,147.0 299.0,184.0 290.0,184.0" fill="#484848"/>
<rect x="249.5" y="162.5" width="38.0" height="33.5" fill="#5c5c5c"/>
<rect x="219.5" y="166.5" width="26.0" height="30.5" fill="#565656"/>
<rect x="217.0" y="165.0" width="30.0" height="3.5" fill="#343434"/>
<rect x="236.0" y="156.0" width="54.0" height="6.0" fill="#787878"/>
<rect x="245.8" y="162.0" width="4.0" height="34.0" fill="#d2d2d2"/>
<ellipse cx="296.0" cy="188.0" rx="6.6" ry="5.4" fill="#acacac"/>
<rect x="198.0" y="172.0" width="21.0" height="4.0" fill="#d7d7d7"/>
<polygon points="196.0,198.0 308.0,197.0 308.0,203.0 196.0,204.0" fill="#5c5c5c"/>
<rect x="314.0" y="180.0" width="4.0" height="38.0" fill="#cdcdcd"/>
<rect x="321.0" y="176.0" width="8.0" height="40.0" fill="#c8c8c8" opacity="0.6"/>
<rect x="162.5" y="186.0" width="9.5" height="14.0" fill="#969696"/>
<rect x="163.5" y="188.0" width="7.5" height="3.0" fill="#787878"/>
<rect x="145.0" y="146.0" width="2.5" height="14.0" fill="#3c3c3c"/>
<rect x="128.0" y="148.0" width="24.0" height="2.0" fill="#555555"/>
<polygon points="-2.0,177.5 100.0,191.5 183.0,204.5 303.0,220.0 402.0,231.5 402.0,302.0 -2.0,302.0" fill="#a0a0a0"/>
<polygon points="-2.0,177.5 100.0,191.5 183.0,204.5 303.0,220.0 402.0,231.5 402.0,240.0 303.0,229.0 183.0,213.0 -2.0,186.0" fill="#929292" opacity="0.8"/>
<line x1="0.0" y1="264.0" x2="75.0" y2="262.0" stroke="#696969" stroke-width="1.5"/>
<line x1="0.0" y1="238.0" x2="400.0" y2="262.0" stroke="#8c8c8c" stroke-width="1.0"/>
<rect x="21.0" y="203.0" width="5.5" height="6.5" fill="#323232"/>
<ellipse cx="24.0" cy="221.0" rx="9.0" ry="11.0" fill="#707070"/>
<ellipse cx="90.5" cy="199.5" rx="7.0" ry="9.0" fill="#606060"/>
<ellipse cx="112.5" cy="203.0" rx="9.0" ry="11.0" fill="#5a5a5a"/>
<ellipse cx="209.0" cy="221.0" rx="8.0" ry="8.0" fill="#626262"/>
<ellipse cx="258.0" cy="226.0" rx="10.0" ry="9.0" fill="#606060"/>
<ellipse cx="297.0" cy="228.0" rx="5.0" ry="5.0" fill="#767676"/>
<ellipse cx="366.0" cy="280.0" rx="22.0" ry="26.0" fill="#404040"/>
<ellipse cx="352.0" cy="262.0" rx="20.0" ry="10.0" fill="#606060" transform="rotate(25 352.0 262.0)" opacity="0.8"/>
<ellipse cx="382.0" cy="258.0" rx="8.0" ry="18.0" fill="#5c5c5c" transform="rotate(10 382.0 258.0)" opacity="0.8"/>
<ellipse cx="386.0" cy="232.0" rx="5.0" ry="6.0" fill="#646464"/>
<polygon points="165.5,-2.0 169.8,-2.0 176.5,86.0 183.0,148.0 198.8,302.0 189.5,302.0 178.0,148.0 172.5,86.0" fill="#4a4a4a"/>
<polygon points="165.5,-2.0 169.8,-2.0 175.0,70.0 171.5,70.0" fill="#303030"/>
<rect x="164.0" y="36.0" width="14.0" height="2.5" fill="#464646"/>
<rect x="170.0" y="58.0" width="7.0" height="12.0" fill="#b9b9b9"/>
<rect x="186.3" y="226.0" width="5.0" height="20.0" fill="#e8e8e8"/>
</g></g>
<rect x="0" y="0" width="400.8" height="298.0" filter="url(#p3n)" opacity="0.17" style="mix-blend-mode:overlay"/>
</g>
<rect x="0" y="-2.1" width="400.8" height="2.1" fill="#dcdcdc"/><rect x="0" y="0" width="400.8" height="298.0" fill="none" stroke="#8f8f8f" stroke-width="0.7"/>
</g>
</svg>
</body></html>
